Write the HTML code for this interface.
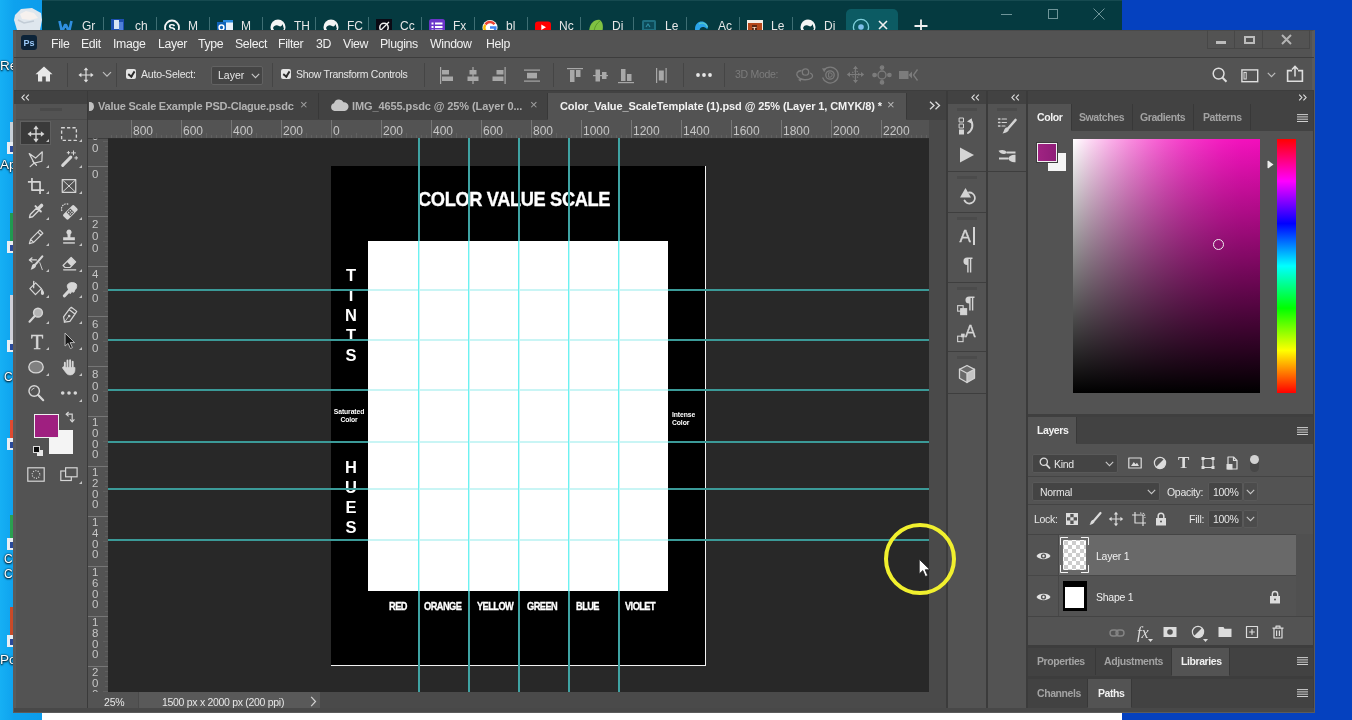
<!DOCTYPE html>
<html>
<head>
<meta charset="utf-8">
<title>Photoshop</title>
<style>
*{box-sizing:border-box;margin:0;padding:0}
html,body{width:1352px;height:720px;overflow:hidden;background:#0541bf;font-family:"Liberation Sans",sans-serif;}
.abs{position:absolute}
#desk-l{left:0;top:0;width:42px;height:720px;background:linear-gradient(90deg,#16b0f4 0,#0ea2ee 14px,#0c9cec 42px)}
#desk-r{left:1122px;top:0;width:230px;height:720px;background:#0541bf}
#browser{left:42px;top:0;width:1080px;height:720px;background:#fff}
#btop{left:0;top:0;width:1080px;height:30px;background:#053a40;overflow:hidden}
.bl{top:19px;font-size:13px;line-height:15px;color:#d5e6e8}
#ps{left:13px;top:30px;width:1302px;height:683px;background:#535353;border:solid #5b5b5b;border-width:1px 3px 4px 3px;border-top-color:#4a4a4a}
/* everything inside ps-abs uses page coordinates via #pg wrapper */
#pg{left:0;top:0;width:1352px;height:720px;will-change:transform}
#browser,#desk-l{will-change:transform}
.t{position:absolute;white-space:nowrap;color:#e6e6e6;font-size:12px;line-height:14px}
.menu{font-size:12.3px;color:#f0f0f0;top:37px;line-height:15px;letter-spacing:-0.35px}
.vsep{position:absolute;width:1px;background:#454545;top:63px;height:24px}
.cb{width:10px;height:10px;background:#e4e4e4;border-radius:2px}
.cb:after{content:"";position:absolute;left:2.2px;top:1.2px;width:4.5px;height:5.5px;border:solid #2a2a2a;border-width:0 2px 2px 0;transform:rotate(40deg) skewX(8deg);transform-origin:50% 50%;height:5px;width:3px;left:3px;top:0.8px}
.tab{top:99px;font-size:11px;font-weight:bold;letter-spacing:-0.1px}
#hr i,#vr i{position:absolute;width:1px;background:#767676;display:block}
#hr b,#vr b{position:absolute;font-weight:normal;font-size:12px;line-height:12px;color:#c6c6c6}
#hr b{top:4.5px}
#vr b{font-size:11.5px}
.doc{color:#fff;font-weight:bold}
.vl{left:341px;width:20px;text-align:center;font-size:16.5px;line-height:18px}
.tiny{font-size:6.8px;line-height:8.3px;text-align:center;letter-spacing:-0.1px}
.hl{-webkit-text-stroke:0.3px #fff;top:601px;font-size:10px;line-height:11px;letter-spacing:-0.6px;transform-origin:0 50%;transform:scaleX(.925)}
.gh{left:108px;width:821px;height:2px;background:#3b9a98}
.gh.w{left:368px;width:300px;background:#c9f5f5}
.gv{top:138px;height:554px;width:2px;background:#3fa3a3}
.gv.w{top:241px;height:350px;background:linear-gradient(90deg,#6cf2f2 0,#6cf2f2 50%,#c4f8f8 50%)}
.ptab{font-size:10.5px;font-weight:bold;color:#a3a3a3;letter-spacing:-0.42px}
.ptab.on{color:#f2f2f2}
.fld{background:#444;border:1px solid #595959;border-radius:2px}
.dk{color:#fff;font-size:13.5px;line-height:15px;text-shadow:0 0 2px #000,0 1px 2px #000}
</style>
</head>
<body>
<div class="abs" id="desk-l"><svg class="abs" style="left:12px;top:6px" width="32" height="26" viewBox="0 0 32 26"><path d="M3 9 L9 3 L20 2 L29 7 L30 14 L28 24 H5 L2 14Z" fill="#dfe7ee"/><path d="M8 8 L14 5 L22 7 L26 12 L18 14 L10 13Z" fill="#f6f1ee"/><path d="M6 14 L12 17 L22 15" stroke="#c2ccd6" stroke-width="1.5" fill="none"/></svg><span class="t dk" style="left:0px;top:58px">Re</span><span class="t dk" style="left:0px;top:157px">Ap</span><span class="t dk" style="left:4px;top:370px;font-size:12px">C</span><span class="t dk" style="left:4px;top:552px;font-size:12px">C</span><span class="t dk" style="left:4px;top:567px;font-size:12px">C</span><span class="t dk" style="left:0px;top:652px">Po</span><div class="abs" style="left:9.5px;top:122px;width:5px;height:20px;background:#c8d0d8"></div><div class="abs" style="left:7px;top:142px;width:7px;height:12px;background:#e8eef4"></div><div class="abs" style="left:9.5px;top:146px;width:5px;height:6px;background:#2a4a9a"></div><div class="abs" style="left:9.5px;top:213px;width:5px;height:28px;background:#1f9a50"></div><div class="abs" style="left:7px;top:241px;width:7px;height:12px;background:#e8eef4"></div><div class="abs" style="left:9.5px;top:245px;width:5px;height:6px;background:#2a4a9a"></div><div class="abs" style="left:9.5px;top:295px;width:5px;height:45px;background:#d0d0d8"></div><div class="abs" style="left:7px;top:340px;width:7px;height:12px;background:#e8eef4"></div><div class="abs" style="left:9.5px;top:344px;width:5px;height:6px;background:#2a4a9a"></div><div class="abs" style="left:9.5px;top:420px;width:5px;height:18px;background:#e04a30"></div><div class="abs" style="left:7px;top:438px;width:7px;height:12px;background:#e8eef4"></div><div class="abs" style="left:9.5px;top:442px;width:5px;height:6px;background:#2a4a9a"></div><div class="abs" style="left:9.5px;top:515px;width:5px;height:23px;background:#2aa050"></div><div class="abs" style="left:7px;top:538px;width:7px;height:12px;background:#e8eef4"></div><div class="abs" style="left:9.5px;top:542px;width:5px;height:6px;background:#2a4a9a"></div><div class="abs" style="left:9.5px;top:607px;width:5px;height:28px;background:#c84a28"></div><div class="abs" style="left:7px;top:635px;width:7px;height:12px;background:#e8eef4"></div><div class="abs" style="left:9.5px;top:639px;width:5px;height:6px;background:#2a4a9a"></div></div>
<div class="abs" id="desk-r"></div>
<div class="abs" id="browser"><div class="abs" id="btop"><div class="abs" style="left:0;top:0;width:1080px;height:1px;background:#164a50"></div><div class="abs" style="left:804px;top:9px;width:52px;height:24px;background:#0c5b63;border-radius:5px 5px 0 0"></div><span class="t bl" style="left:40px">Gr</span><div class="abs" style="left:61px;top:17px;width:1px;height:14px;background:#3f6f74"></div><span class="t bl" style="left:93px">ch</span><div class="abs" style="left:114px;top:17px;width:1px;height:14px;background:#3f6f74"></div><span class="t bl" style="left:146px">M</span><div class="abs" style="left:167px;top:17px;width:1px;height:14px;background:#3f6f74"></div><span class="t bl" style="left:199px">M</span><div class="abs" style="left:220px;top:17px;width:1px;height:14px;background:#3f6f74"></div><span class="t bl" style="left:252px">TH</span><div class="abs" style="left:273px;top:17px;width:1px;height:14px;background:#3f6f74"></div><span class="t bl" style="left:305px">FC</span><div class="abs" style="left:326px;top:17px;width:1px;height:14px;background:#3f6f74"></div><span class="t bl" style="left:358px">Cc</span><div class="abs" style="left:379px;top:17px;width:1px;height:14px;background:#3f6f74"></div><span class="t bl" style="left:411px">Fx</span><div class="abs" style="left:432px;top:17px;width:1px;height:14px;background:#3f6f74"></div><span class="t bl" style="left:464px">bl</span><div class="abs" style="left:485px;top:17px;width:1px;height:14px;background:#3f6f74"></div><span class="t bl" style="left:517px">Nc</span><div class="abs" style="left:538px;top:17px;width:1px;height:14px;background:#3f6f74"></div><span class="t bl" style="left:570px">Di</span><div class="abs" style="left:591px;top:17px;width:1px;height:14px;background:#3f6f74"></div><span class="t bl" style="left:623px">Le</span><div class="abs" style="left:644px;top:17px;width:1px;height:14px;background:#3f6f74"></div><span class="t bl" style="left:676px">Ac</span><div class="abs" style="left:697px;top:17px;width:1px;height:14px;background:#3f6f74"></div><span class="t bl" style="left:729px">Le</span><div class="abs" style="left:750px;top:17px;width:1px;height:14px;background:#3f6f74"></div><span class="t bl" style="left:782px">Di</span><svg class="abs" style="left:16px;top:19px" width="16" height="16" viewBox="0 0 16 16"><path d="M1.5 2 L4 13 L7 6 L8 6 L11 13 L13.5 2" stroke="#2f8fe0" stroke-width="2.6" fill="none" stroke-linejoin="round"/></svg><svg class="abs" style="left:69px;top:19px" width="16" height="16" viewBox="0 0 16 16"><rect x="0" y="0" width="13" height="14" fill="#1d4fb0"/><rect x="3" y="1" width="5" height="9" fill="#d8e4f4"/><rect x="8" y="3" width="4" height="8" fill="#4f7fd8"/></svg><svg class="abs" style="left:122px;top:19px" width="16" height="16" viewBox="0 0 16 16"><circle cx="8" cy="8.5" r="7" fill="#053a40" stroke="#f4f4f4" stroke-width="1.8"/><text x="8" y="13" font-family="Liberation Sans" font-weight="bold" font-size="11" fill="#fff" text-anchor="middle">S</text></svg><svg class="abs" style="left:175px;top:19px" width="16" height="16" viewBox="0 0 16 16"><rect x="6" y="1" width="10" height="13" fill="#2a8be0"/><rect x="9" y="3.5" width="7" height="8" fill="#eaf2fb"/><rect x="0" y="3" width="9" height="11" fill="#0f63b8"/><circle cx="4.5" cy="8.5" r="2.4" fill="none" stroke="#fff" stroke-width="1.5"/></svg><svg class="abs" style="left:228px;top:19px" width="16" height="16" viewBox="0 0 16 16"><circle cx="8" cy="8" r="7.5" fill="#f4f4f4"/><path d="M3 9 C4 6 7 5.5 9 7 C10.5 8 12 7 12.5 5 L14 10 L10 14 L5 13Z" fill="#053a40"/></svg><svg class="abs" style="left:281px;top:19px" width="16" height="16" viewBox="0 0 16 16"><circle cx="8" cy="8" r="7.5" fill="#f4f4f4"/><path d="M3 9 C4 6 7 5.5 9 7 C10.5 8 12 7 12.5 5 L14 10 L10 14 L5 13Z" fill="#053a40"/></svg><svg class="abs" style="left:334px;top:19px" width="16" height="16" viewBox="0 0 16 16"><rect x="-2" y="-1" width="18" height="18" fill="#0a0a14"/><circle cx="8" cy="8.5" r="4.2" fill="none" stroke="#f0f0f0" stroke-width="1.5"/><path d="M3 13L13 3" stroke="#f0f0f0" stroke-width="1.3"/></svg><svg class="abs" style="left:387px;top:19px" width="16" height="16" viewBox="0 0 16 16"><rect x="0" y="0" width="16" height="16" rx="2.5" fill="#6b35c9"/><path d="M2.5 4.5H4.5M6 4.5H13.5M2.5 8H4.5M6 8H13.5M2.5 11.5H4.5M6 11.5H13.5" stroke="#fff" stroke-width="1.8"/></svg><svg class="abs" style="left:440px;top:19px" width="16" height="16" viewBox="0 0 16 16"><circle cx="8" cy="8.5" r="7.5" fill="#fff"/><path d="M12.5 5.2 A5.4 5.4 0 0 0 3.5 5.5" stroke="#ea4335" stroke-width="2.4" fill="none"/><path d="M3.3 5.8 A5.4 5.4 0 0 0 3.6 12" stroke="#fbbc05" stroke-width="2.4" fill="none"/><path d="M3.6 12 A5.4 5.4 0 0 0 12 12.5" stroke="#34a853" stroke-width="2.4" fill="none"/><path d="M8 8.5 H13.4 A5.4 5.4 0 0 1 12 12.5" stroke="#4285f4" stroke-width="2.4" fill="none"/></svg><svg class="abs" style="left:493px;top:19px" width="16" height="16" viewBox="0 0 16 16"><rect x="0" y="2.5" width="16" height="11.5" rx="3" fill="#f00"/><path d="M6.3 5.5 L11 8.2 L6.3 11Z" fill="#fff"/></svg><svg class="abs" style="left:546px;top:19px" width="16" height="16" viewBox="0 0 16 16"><path d="M1 14 C1 5 6 0 12 1 C16 4 15 10 14 14 Z" fill="#7fc242"/><path d="M6 14 C6 8 9 4 12 2" stroke="#5a9a2a" stroke-width="1" fill="none"/></svg><svg class="abs" style="left:599px;top:19px" width="16" height="16" viewBox="0 0 16 16"><rect x="1" y="1" width="14" height="12" rx="1.5" fill="#1f6f80"/><rect x="3" y="3" width="10" height="7" fill="#0c4a58"/><path d="M5 8 L7 5 L9 8" stroke="#2f8da0" stroke-width="1.2" fill="none"/></svg><svg class="abs" style="left:652px;top:19px" width="16" height="16" viewBox="0 0 16 16"><path d="M1 10 C1 4 6 1.5 10 3 C14 4.5 15 9 13 10 C10 7 6 7.5 5.5 11 C5 13.5 8 15 11 14 C7 17 1 15 1 10Z" fill="#2aa3e8"/><path d="M5 5 C8 3 12 4 13.5 8" stroke="#5fd0c0" stroke-width="1.2" fill="none"/></svg><svg class="abs" style="left:705px;top:19px" width="16" height="16" viewBox="0 0 16 16"><rect x="0" y="1" width="16" height="15" fill="#f2ece6"/><rect x="1" y="4" width="14" height="12" fill="#b5461a"/><rect x="5" y="6" width="5" height="8" fill="#5a2410"/><text x="7.5" y="13" font-family="Liberation Sans" font-weight="bold" font-size="7" fill="#f4d8c0" text-anchor="middle">T</text></svg><svg class="abs" style="left:758px;top:19px" width="16" height="16" viewBox="0 0 16 16"><circle cx="8" cy="8" r="7.5" fill="#f4f4f4"/><path d="M3 9 C4 6 7 5.5 9 7 C10.5 8 12 7 12.5 5 L14 10 L10 14 L5 13Z" fill="#053a40"/></svg><svg class="abs" style="left:810px;top:18px" width="18" height="18" viewBox="0 0 18 18"><circle cx="9" cy="9" r="7.6" fill="none" stroke="#7fd0dc" stroke-width="1.3"/><circle cx="9" cy="9" r="2.8" fill="#7fc0ea"/></svg><svg class="abs" style="left:836px;top:20px" width="10" height="10" viewBox="0 0 10 10"><path d="M1 1L9 9M9 1L1 9" stroke="#f0f0f0" stroke-width="1.6"/></svg><svg class="abs" style="left:872px;top:19px" width="14" height="14" viewBox="0 0 14 14"><path d="M7 0.5V13.5M0.5 7H13.5" stroke="#f0f0f0" stroke-width="1.8"/></svg><div class="abs" style="left:959px;top:14px;width:11px;height:1px;background:#6f9599"></div><div class="abs" style="left:1006px;top:9px;width:10px;height:10px;border:1px solid #6f9599"></div><svg class="abs" style="left:1051px;top:8px" width="12" height="12" viewBox="0 0 12 12"><path d="M0.5 0.5L11.5 11.5M11.5 0.5L0.5 11.5" stroke="#6f9599" stroke-width="1"/></svg></div></div>
<div class="abs" id="ps"></div>
<div class="abs" id="pg">
<!-- MENUBAR -->
<div class="abs" style="left:14px;top:57px;width:1300px;height:1px;background:#3d3d3d"></div>
<div class="abs" id="pslogo" style="left:21px;top:35px;width:16px;height:15px;background:#0c2338;border-radius:3px"></div>
<span class="t" style="left:23.5px;top:36.5px;font-size:9px;font-weight:bold;color:#9ccaf8;line-height:12px">Ps</span>
<span class="t menu" style="left:51px">File</span>
<span class="t menu" style="left:81px">Edit</span>
<span class="t menu" style="left:113px">Image</span>
<span class="t menu" style="left:158px">Layer</span>
<span class="t menu" style="left:198px">Type</span>
<span class="t menu" style="left:235px">Select</span>
<span class="t menu" style="left:278px">Filter</span>
<span class="t menu" style="left:316px">3D</span>
<span class="t menu" style="left:343px">View</span>
<span class="t menu" style="left:380px">Plugins</span>
<span class="t menu" style="left:430px">Window</span>
<span class="t menu" style="left:486px">Help</span>
<!-- OPTIONSBAR -->
<div class="abs" style="left:14px;top:90px;width:1300px;height:1px;background:#3d3d3d"></div>
<svg class="abs" style="left:34px;top:65px" width="20" height="18" viewBox="0 0 20 18"><path d="M10 1.5 L1.5 9.2 H4 V16.5 H8.2 V11.5 H11.8 V16.5 H16 V9.2 H18.5 Z" fill="#e8e8e8"/></svg>
<div class="vsep" style="left:67px"></div>
<svg class="abs" style="left:77.5px;top:66.5px" width="16" height="16" viewBox="0 0 19 19"><g stroke="#e0e0e0" stroke-width="1.4" fill="none"><path d="M9.5 2.5V16.5M2.5 9.5H16.5"/></g><path d="M9.5 0.5 L12.3 4 H6.7Z M9.5 18.5 L12.3 15 H6.7Z M0.5 9.5 L4 6.7 V12.3Z M18.5 9.5 L15 6.7 V12.3Z" fill="#e0e0e0"/></svg>
<svg class="abs" style="left:102px;top:71px" width="10" height="7" viewBox="0 0 10 7"><path d="M1 1.2 L5 5.2 L9 1.2" stroke="#bdbdbd" stroke-width="1.2" fill="none"/></svg>
<div class="vsep" style="left:116px"></div>
<div class="abs cb" style="left:126px;top:69px"></div>
<span class="t" style="left:141px;top:67px;font-size:10.5px;letter-spacing:-0.2px">Auto-Select:</span>
<div class="abs" style="left:211px;top:66px;width:52px;height:19px;background:#454545;border:1px solid #626262;border-radius:2px"></div>
<span class="t" style="left:218px;top:68px;font-size:10.5px">Layer</span>
<svg class="abs" style="left:251px;top:73px" width="9" height="6" viewBox="0 0 9 6"><path d="M0.8 0.8 L4.5 4.6 L8.2 0.8" stroke="#c8c8c8" stroke-width="1.1" fill="none"/></svg>
<div class="vsep" style="left:272px"></div>
<div class="abs cb" style="left:281px;top:69px"></div>
<span class="t" style="left:296px;top:67px;font-size:10.5px;letter-spacing:-0.3px">Show Transform Controls</span>
<div class="vsep" style="left:424px"></div>
<!-- align icons -->
<svg class="abs" style="left:438px;top:66px" width="110" height="19" viewBox="0 0 110 19" fill="#a8a8a8">
<rect x="2" y="1" width="1.2" height="17"/><rect x="4" y="4" width="7" height="4.5"/><rect x="4" y="10.5" width="11" height="4.5"/>
<rect x="34.4" y="1" width="1.2" height="17"/><rect x="31.5" y="4" width="7" height="4.5"/><rect x="29.5" y="10.5" width="11" height="4.5"/>
<rect x="66.5" y="1" width="1.2" height="17"/><rect x="58.5" y="4" width="7" height="4.5"/><rect x="54.5" y="10.5" width="11" height="4.5"/>
<rect x="86" y="3.5" width="16" height="1.2"/><rect x="86" y="14.5" width="16" height="1.2"/><rect x="89" y="6.8" width="10" height="5.6"/>
</svg>
<div class="vsep" style="left:553px"></div>
<svg class="abs" style="left:564px;top:66px" width="110" height="19" viewBox="0 0 110 19" fill="#a8a8a8">
<rect x="3" y="2" width="16" height="1.2"/><rect x="6" y="4" width="4.5" height="12"/><rect x="12" y="4" width="4.5" height="7"/>
<rect x="29" y="9" width="15" height="1.2"/><rect x="31.5" y="3.5" width="4.5" height="12"/><rect x="38" y="6" width="4.5" height="7"/>
<rect x="54" y="16" width="16" height="1.2"/><rect x="57" y="3" width="4.5" height="12"/><rect x="63" y="8" width="4.5" height="7"/>
<rect x="92" y="2" width="1.2" height="15"/><rect x="101.5" y="2" width="1.2" height="15"/><rect x="94.8" y="4.5" width="5" height="10"/>
</svg>
<div class="vsep" style="left:683px"></div>
<svg class="abs" style="left:695px;top:72px" width="18" height="6" viewBox="0 0 18 6" fill="#e6e6e6"><circle cx="3" cy="3" r="1.9"/><circle cx="9" cy="3" r="1.9"/><circle cx="15" cy="3" r="1.9"/></svg>
<div class="vsep" style="left:724px"></div>
<span class="t" style="left:735px;top:67px;font-size:11px;color:#7c7c7c;letter-spacing:-0.3px;font-size:10.5px">3D Mode:</span>
<svg class="abs" style="left:794px;top:65px" width="20" height="20" viewBox="0 0 20 20" fill="none" stroke="#7c7c7c" stroke-width="1.3"><circle cx="11.5" cy="7" r="3.2"/><path d="M7.5 5.5 C3 6 1.5 9 4 12 C7 15.5 14 15.5 17.5 13 C19.5 11.5 18.5 9 16 8"/><path d="M4 14.8 L7.8 13.2 L6.6 16.8Z" fill="#7c7c7c" stroke="none"/></svg>
<svg class="abs" style="left:820px;top:65px" width="20" height="20" viewBox="0 0 20 20" fill="none" stroke="#7c7c7c" stroke-width="1.3"><path d="M4 5 A8 8 0 1 1 2.6 12.5"/><path d="M2 3.2 L6.2 3.6 L4.2 7.2Z" fill="#7c7c7c" stroke="none"/><circle cx="10" cy="10" r="4.2"/><path d="M8.6 7.8 V12.2 H10 A2.2 2.2 0 0 0 10 7.8Z" stroke-width="1"/></svg>
<svg class="abs" style="left:846px;top:65px" width="19" height="19" viewBox="0 0 19 19" fill="none" stroke="#7c7c7c" stroke-width="1.2"><path d="M9.5 3V16M3 9.5H16"/><path d="M9.5 0.8 L12 4 H7Z M9.5 18.2 L12 15 H7Z M0.8 9.5 L4 7 V12Z M18.2 9.5 L15 7 V12Z" fill="#7c7c7c" stroke="none"/><circle cx="9.5" cy="9.5" r="3.4" stroke-dasharray="1.2 1.2"/></svg>
<svg class="abs" style="left:872px;top:65px" width="20" height="20" viewBox="0 0 20 20" fill="none" stroke="#7c7c7c" stroke-width="1.3"><circle cx="10" cy="10" r="4"/><circle cx="10" cy="2.6" r="1.7" fill="#7c7c7c"/><circle cx="10" cy="17.4" r="1.7" fill="#7c7c7c"/><circle cx="2.6" cy="10" r="1.7" fill="#7c7c7c"/><circle cx="17.4" cy="10" r="1.7" fill="#7c7c7c"/></svg>
<svg class="abs" style="left:898px;top:67px" width="21" height="16" viewBox="0 0 21 16" fill="none" stroke="#7c7c7c" stroke-width="1.3"><rect x="1" y="4" width="9.5" height="8" fill="#7c7c7c" stroke="none"/><path d="M10.5 8 L14 4.6 V11.4Z" fill="#7c7c7c" stroke="none"/><path d="M19.5 2.5 L15.5 8 L19.5 13.5"/></svg>
<div class="abs" style="left:1207px;top:30px;width:103px;height:19px;border:1px solid #474747;border-top:none"></div>
<div class="abs" style="left:1234px;top:30px;width:1px;height:18px;background:#474747"></div>
<div class="abs" style="left:1262px;top:30px;width:1px;height:18px;background:#474747"></div>
<div class="abs" style="left:1216px;top:41px;width:10px;height:3px;background:#bcbcbc"></div>
<div class="abs" style="left:1244px;top:36px;width:11px;height:8px;border:2px solid #bcbcbc"></div>
<svg class="abs" style="left:1281px;top:34px" width="11" height="11" viewBox="0 0 11 11"><path d="M1 1L10 10M10 1L1 10" stroke="#b4b4b4" stroke-width="2"/></svg>
<svg class="abs" style="left:1211px;top:66px" width="17" height="17" viewBox="0 0 17 17" fill="none" stroke="#dedede"><circle cx="7.6" cy="7.6" r="5.4" stroke-width="1.5"/><path d="M11.6 11.8 L15.5 15.8" stroke-width="2"/></svg>
<svg class="abs" style="left:1241px;top:69px" width="18" height="14" viewBox="0 0 18 14" fill="none" stroke="#dedede" stroke-width="1.4"><rect x="0.9" y="0.9" width="15.8" height="11.8"/><rect x="3" y="3.4" width="2.2" height="6.6" stroke-width="1"/></svg>
<svg class="abs" style="left:1267px;top:72px" width="9" height="6" viewBox="0 0 9 6"><path d="M0.8 0.8 L4.5 4.6 L8.2 0.8" stroke="#bdbdbd" stroke-width="1.2" fill="none"/></svg>
<svg class="abs" style="left:1286px;top:65px" width="18" height="18" viewBox="0 0 18 18" fill="none" stroke="#dedede" stroke-width="1.6"><path d="M6 5.6 H1.6 V16.2 H16.4 V5.6 H12"/><path d="M9 11.5 V2 M6 4.6 L9 1.4 L12 4.6" stroke-width="1.5"/></svg>
<!-- TABS -->
<div class="abs" style="left:14px;top:91px;width:1300px;height:13px;background:#424242"></div>
<div class="abs" style="left:88px;top:91px;width:858px;height:29px;background:#424242"></div>
<div class="abs" style="left:548px;top:93px;width:358px;height:27px;background:#535353"></div>
<div class="abs" style="left:318px;top:93px;width:1px;height:26px;background:#383838"></div>
<div class="abs" style="left:547px;top:93px;width:1px;height:26px;background:#383838"></div>
<div class="abs" style="left:906px;top:93px;width:1px;height:26px;background:#383838"></div>
<div class="abs" style="left:87px;top:91px;width:1px;height:620px;background:#3a3a3a"></div>
<svg class="abs" style="left:89px;top:102px" width="5" height="9" viewBox="0 0 5 9"><path d="M0 0 H1 A4 4.5 0 0 1 1 9 H0Z" fill="#c0c0c0"/></svg>
<span class="t tab" style="left:98px;color:#b2b2b2;letter-spacing:-0.23px">Value Scale Example PSD-Clague.psdc</span>
<span class="t" style="left:300px;top:98px;font-size:13px;color:#a0a0a0">×</span>
<svg class="abs" style="left:330px;top:99px" width="19" height="12" viewBox="0 0 19 12"><path d="M4.5 12 A4 4 0 0 1 4 4.2 A5.2 5.2 0 0 1 13.6 3.2 A4.4 4.4 0 0 1 14.6 12 Z" fill="#c6c6c6"/></svg>
<span class="t tab" style="left:352px;color:#b2b2b2">IMG_4655.psdc @ 25% (Layer 0...</span>
<span class="t" style="left:530px;top:98px;font-size:13px;color:#a0a0a0">×</span>
<span class="t tab" style="left:560px;color:#f2f2f2">Color_Value_ScaleTemplate (1).psd @ 25% (Layer 1, CMYK/8) *</span>
<span class="t" style="left:887px;top:98px;font-size:13px;color:#b8b8b8">×</span>
<svg class="abs" style="left:929px;top:101px" width="12" height="9" viewBox="0 0 12 9"><path d="M1 0.8 L5 4.5 L1 8.2 M6.5 0.8 L10.5 4.5 L6.5 8.2" stroke="#dcdcdc" stroke-width="1.3" fill="none"/></svg>
<!-- TOOLS -->
<div class="abs" style="left:16px;top:104px;width:71px;height:15px;background:#535353"></div>
<div class="abs" style="left:16px;top:119px;width:71px;height:1px;background:#4a4a4a"></div>
<div class="abs" style="left:40px;top:108px;width:22px;height:3px;background:#4a4a4a"></div>
<svg class="abs" style="left:21px;top:94px" width="9" height="7" viewBox="0 0 9 7"><path d="M3.6 0.6 L0.9 3.5 L3.6 6.4 M7.8 0.6 L5.1 3.5 L7.8 6.4" stroke="#e2e2e2" stroke-width="1.1" fill="none"/></svg>
<div class="abs" style="left:20px;top:121px;width:31px;height:24px;background:#3a3a3a;border:1px solid #5f5f5f"></div>
<svg class="abs" style="left:26.5px;top:124.5px" width="18" height="18" viewBox="0 0 20 20" fill="none" stroke="#d6d6d6" stroke-width="1.35" stroke-linecap="round" stroke-linejoin="round"><path d="M10 3V17M3 10H17" stroke-width="1.5"/><path d="M10 0.6 L13 4.6 H7Z M10 19.4 L13 15.4 H7Z M0.6 10 L4.6 7 V13Z M19.4 10 L15.4 7 V13Z" fill="#d6d6d6" stroke="none"/></svg>
<svg class="abs" style="left:60px;top:124.5px" width="18" height="18" viewBox="0 0 20 20" fill="none" stroke="#d6d6d6" stroke-width="1.35" stroke-linecap="round" stroke-linejoin="round"><rect x="1.8" y="3" width="16.4" height="14" stroke-dasharray="3.6 2.4" stroke-linecap="butt" stroke-width="1.5"/></svg>
<svg class="abs" style="left:26.5px;top:150px" width="18" height="18" viewBox="0 0 20 20" fill="none" stroke="#d6d6d6" stroke-width="1.35" stroke-linecap="round" stroke-linejoin="round"><path d="M2.5 4 L9.5 9 L17 2 L16.5 12.5 L8 14.5 Z"/><path d="M8 14.5 L3.5 18.5 M8 14.5 L10.5 17 M6.5 12.5 L8 14.5" /></svg>
<svg class="abs" style="left:60px;top:150px" width="18" height="18" viewBox="0 0 20 20" fill="none" stroke="#d6d6d6" stroke-width="1.35" stroke-linecap="round" stroke-linejoin="round"><path d="M3 17 L12 8" stroke-width="3.4" stroke-linecap="round"/><path d="M15 1V5.4M12.8 3.2H17.2M18 7.2V10.4M16.4 8.8H19.6M9.4 1.6V4.4M8 3H10.8" stroke-width="1.1"/></svg>
<svg class="abs" style="left:26.5px;top:176.5px" width="18" height="18" viewBox="0 0 20 20" fill="none" stroke="#d6d6d6" stroke-width="1.35" stroke-linecap="round" stroke-linejoin="round"><path d="M5.5 1V14.5H19M1 5.5H14.5V19" stroke-width="1.9" stroke-linecap="butt"/></svg>
<svg class="abs" style="left:60px;top:176.5px" width="18" height="18" viewBox="0 0 20 20" fill="none" stroke="#d6d6d6" stroke-width="1.35" stroke-linecap="round" stroke-linejoin="round"><rect x="2.5" y="3" width="15" height="14"/><path d="M2.5 3L17.5 17M17.5 3L2.5 17" stroke-width="1.1"/></svg>
<svg class="abs" style="left:26.5px;top:202px" width="18" height="18" viewBox="0 0 20 20" fill="none" stroke="#d6d6d6" stroke-width="1.35" stroke-linecap="round" stroke-linejoin="round"><path d="M2.8 17.2 L3.6 13.8 L10.5 6.9 L13.1 9.5 L6.2 16.4 Z" stroke-width="1.5"/><path d="M9.4 4.6 L15.4 10.6" stroke-width="2.2"/><path d="M12.6 7.4 L16.2 3.8" stroke-width="3.8"/></svg>
<svg class="abs" style="left:60px;top:202px" width="18" height="18" viewBox="0 0 20 20" fill="none" stroke="#d6d6d6" stroke-width="1.35" stroke-linecap="round" stroke-linejoin="round"><g transform="rotate(-45 11.5 11.5)"><rect x="3" y="7.5" width="17" height="8" rx="2" fill="#d6d6d6" stroke="none"/><rect x="8.5" y="8.5" width="6" height="6" fill="#535353" stroke="none"/><circle cx="10.2" cy="10.2" r="0.85" fill="#d6d6d6" stroke="none"/><circle cx="12.8" cy="10.2" r="0.85" fill="#d6d6d6" stroke="none"/><circle cx="10.2" cy="12.8" r="0.85" fill="#d6d6d6" stroke="none"/><circle cx="12.8" cy="12.8" r="0.85" fill="#d6d6d6" stroke="none"/></g><path d="M2 9.5 A5.5 5.5 0 0 1 9 2.4" stroke-dasharray="0.8 2" stroke-width="1.3"/></svg>
<svg class="abs" style="left:26.5px;top:228px" width="18" height="18" viewBox="0 0 20 20" fill="none" stroke="#d6d6d6" stroke-width="1.35" stroke-linecap="round" stroke-linejoin="round"><path d="M2.6 17.4 L4 12.6 L14.2 2.4 L17.6 5.8 L7.4 16 Z M4 12.6 L7.4 16 M12 4.6 L15.4 8" stroke-width="1.3"/></svg>
<svg class="abs" style="left:60px;top:228px" width="18" height="18" viewBox="0 0 20 20" fill="none" stroke="#d6d6d6" stroke-width="1.35" stroke-linecap="round" stroke-linejoin="round"><path d="M10 1.8 A2.9 2.9 0 0 1 11.8 7 L11.5 10.2 H16.5 V13.6 H3.5 V10.2 H8.5 L8.2 7 A2.9 2.9 0 0 1 10 1.8Z" fill="#d6d6d6" stroke="none"/><path d="M3.5 16.6H16.5" stroke-width="1.6" stroke-linecap="butt"/></svg>
<svg class="abs" style="left:26.5px;top:254px" width="18" height="18" viewBox="0 0 20 20" fill="none" stroke="#d6d6d6" stroke-width="1.35" stroke-linecap="round" stroke-linejoin="round"><path d="M17 2.6 L10 11" stroke-width="2.4"/><path d="M9.6 11.2 C11 12.8 10 16 4 17.6 C5.4 15.4 5 12.6 6.6 11.4 C7.5 10.7 8.8 10.6 9.6 11.2Z" fill="#d6d6d6" stroke="none"/><path d="M2.6 6.6 H10.5 M2.6 6.6 L5.6 4.2 M2.6 6.6 L5.6 9" stroke-width="1.3"/><path d="M14.2 9.6 L17 17.4" stroke-width="1"/></svg>
<svg class="abs" style="left:60px;top:254px" width="18" height="18" viewBox="0 0 20 20" fill="none" stroke="#d6d6d6" stroke-width="1.35" stroke-linecap="round" stroke-linejoin="round"><path d="M3.4 12.8 L12.4 3.8 L17.4 8.8 L11.2 15 H5.6Z" stroke-width="1.3"/><path d="M7.6 8.6 L12.4 3.8 L17.4 8.8 L12.6 13.6Z" fill="#d6d6d6" stroke="none"/><path d="M4 17.6H17.5" stroke-width="1.3"/></svg>
<svg class="abs" style="left:26.5px;top:280px" width="18" height="18" viewBox="0 0 20 20" fill="none" stroke="#d6d6d6" stroke-width="1.35" stroke-linecap="round" stroke-linejoin="round"><path d="M3.2 9.6 L9.6 3.2 L16 9.6 L9.4 16.2 Z" stroke-width="1.4"/><path d="M7.4 1.4 V8.6" stroke-width="1.4"/><path d="M16.2 9 C17.8 11.4 19 13.2 19 14.8 A1.8 1.8 0 0 1 15.4 14.8 C15.4 13 15.8 11.2 16.2 9Z" fill="#d6d6d6" stroke="none"/></svg>
<svg class="abs" style="left:60px;top:280px" width="18" height="18" viewBox="0 0 20 20" fill="none" stroke="#d6d6d6" stroke-width="1.35" stroke-linecap="round" stroke-linejoin="round"><path d="M12 10 L5 17.5" stroke-width="3.6"/><path d="M8.5 8.5 C7 6 9 3.5 12 3 C15 2.5 18 3.5 18.5 5.5 C18.8 8 18 10 16.5 11 L15.5 13.5 L13 13 L11.5 15 Z" fill="#d6d6d6" stroke="#d6d6d6" stroke-width="1"/></svg>
<svg class="abs" style="left:26.5px;top:306px" width="18" height="18" viewBox="0 0 20 20" fill="none" stroke="#d6d6d6" stroke-width="1.35" stroke-linecap="round" stroke-linejoin="round"><circle cx="12.2" cy="7.4" r="4.9" fill="#b4b4b4" stroke-width="1.6"/><path d="M8.6 11.2 L2.8 17.4" stroke-width="2.4"/></svg>
<svg class="abs" style="left:60px;top:306px" width="18" height="18" viewBox="0 0 20 20" fill="none" stroke="#d6d6d6" stroke-width="1.35" stroke-linecap="round" stroke-linejoin="round"><path d="M5 18 L4 12 L10 4 L16.6 9 L11 17 Z" stroke-width="1.4"/><path d="M5 18 L9.6 11.6" stroke-width="1"/><circle cx="10.2" cy="11" r="1.4" fill="#d6d6d6" stroke="none"/><path d="M10.4 3.2 L12.6 1.4 L18.6 6 L17 8.4" stroke-width="1.3"/></svg>
<span class="t" style="left:31.0px;top:329.5px;font-family:'Liberation Serif',serif;font-size:20px;line-height:24px;color:#d6d6d6;-webkit-text-stroke:0.5px #d6d6d6">T</span>
<svg class="abs" style="left:60px;top:332px" width="18" height="18" viewBox="0 0 20 20" fill="none" stroke="#d6d6d6" stroke-width="1.35" stroke-linecap="round" stroke-linejoin="round"><path d="M5.6 1.6 V15.6 L9 12.6 L11.6 18.4 L13.8 17.4 L11.3 11.8 H15.8 Z" fill="#1a1a1a" stroke="#c4c4c4" stroke-width="1"/></svg>
<svg class="abs" style="left:26.5px;top:358px" width="18" height="18" viewBox="0 0 20 20" fill="none" stroke="#d6d6d6" stroke-width="1.35" stroke-linecap="round" stroke-linejoin="round"><ellipse cx="10" cy="10" rx="8" ry="6.6" fill="#808080" stroke-width="1.5"/></svg>
<svg class="abs" style="left:60px;top:358px" width="18" height="18" viewBox="0 0 20 20" fill="none" stroke="#d6d6d6" stroke-width="1.35" stroke-linecap="round" stroke-linejoin="round"><path d="M5.4 11.5 V5.2 M8.3 10.5 V2.8 M11.2 10.5 V2.4 M14.1 11 V4.2" stroke-width="2.1"/><path d="M4.4 10.5 H15.2 V13 C15.2 16 13.5 18.8 10.5 18.8 H9.5 C7.5 18.8 6.2 17.8 5 16 L1.6 11.4 C0.9 10.2 2.4 9.2 3.4 10.2 L5.2 12.2 Z" fill="#d6d6d6" stroke="#d6d6d6" stroke-width="0.8" transform="translate(1.4 0)"/></svg>
<svg class="abs" style="left:26.5px;top:384px" width="18" height="18" viewBox="0 0 20 20" fill="none" stroke="#d6d6d6" stroke-width="1.35" stroke-linecap="round" stroke-linejoin="round"><circle cx="8" cy="7.8" r="5.8" stroke-width="1.6"/><path d="M12.4 12.2 L18 18" stroke-width="2.4"/><path d="M5.2 6.8 A3.2 3.2 0 0 1 7.8 4.6" stroke-width="1"/></svg>
<svg class="abs" style="left:60px;top:384px" width="18" height="18" viewBox="0 0 20 20" fill="none" stroke="#d6d6d6" stroke-width="1.35" stroke-linecap="round" stroke-linejoin="round"><circle cx="3" cy="10" r="2" fill="#d6d6d6" stroke="none"/><circle cx="10" cy="10" r="2" fill="#d6d6d6" stroke="none"/><circle cx="17" cy="10" r="2" fill="#d6d6d6" stroke="none"/></svg>
<svg class="abs" style="left:46px;top:139px" width="3" height="3" viewBox="0 0 3 3"><path d="M3 0V3H0Z" fill="#c4c4c4"/></svg>
<svg class="abs" style="left:79px;top:139px" width="3" height="3" viewBox="0 0 3 3"><path d="M3 0V3H0Z" fill="#c4c4c4"/></svg>
<svg class="abs" style="left:46px;top:165px" width="3" height="3" viewBox="0 0 3 3"><path d="M3 0V3H0Z" fill="#c4c4c4"/></svg>
<svg class="abs" style="left:79px;top:165px" width="3" height="3" viewBox="0 0 3 3"><path d="M3 0V3H0Z" fill="#c4c4c4"/></svg>
<svg class="abs" style="left:46px;top:191px" width="3" height="3" viewBox="0 0 3 3"><path d="M3 0V3H0Z" fill="#c4c4c4"/></svg>
<svg class="abs" style="left:79px;top:191px" width="3" height="3" viewBox="0 0 3 3"><path d="M3 0V3H0Z" fill="#c4c4c4"/></svg>
<svg class="abs" style="left:46px;top:217px" width="3" height="3" viewBox="0 0 3 3"><path d="M3 0V3H0Z" fill="#c4c4c4"/></svg>
<svg class="abs" style="left:79px;top:217px" width="3" height="3" viewBox="0 0 3 3"><path d="M3 0V3H0Z" fill="#c4c4c4"/></svg>
<svg class="abs" style="left:46px;top:243px" width="3" height="3" viewBox="0 0 3 3"><path d="M3 0V3H0Z" fill="#c4c4c4"/></svg>
<svg class="abs" style="left:79px;top:243px" width="3" height="3" viewBox="0 0 3 3"><path d="M3 0V3H0Z" fill="#c4c4c4"/></svg>
<svg class="abs" style="left:46px;top:269px" width="3" height="3" viewBox="0 0 3 3"><path d="M3 0V3H0Z" fill="#c4c4c4"/></svg>
<svg class="abs" style="left:79px;top:269px" width="3" height="3" viewBox="0 0 3 3"><path d="M3 0V3H0Z" fill="#c4c4c4"/></svg>
<svg class="abs" style="left:46px;top:295px" width="3" height="3" viewBox="0 0 3 3"><path d="M3 0V3H0Z" fill="#c4c4c4"/></svg>
<svg class="abs" style="left:79px;top:295px" width="3" height="3" viewBox="0 0 3 3"><path d="M3 0V3H0Z" fill="#c4c4c4"/></svg>
<svg class="abs" style="left:46px;top:321px" width="3" height="3" viewBox="0 0 3 3"><path d="M3 0V3H0Z" fill="#c4c4c4"/></svg>
<svg class="abs" style="left:79px;top:321px" width="3" height="3" viewBox="0 0 3 3"><path d="M3 0V3H0Z" fill="#c4c4c4"/></svg>
<svg class="abs" style="left:46px;top:347px" width="3" height="3" viewBox="0 0 3 3"><path d="M3 0V3H0Z" fill="#c4c4c4"/></svg>
<svg class="abs" style="left:79px;top:347px" width="3" height="3" viewBox="0 0 3 3"><path d="M3 0V3H0Z" fill="#c4c4c4"/></svg>
<svg class="abs" style="left:46px;top:373px" width="3" height="3" viewBox="0 0 3 3"><path d="M3 0V3H0Z" fill="#c4c4c4"/></svg>
<svg class="abs" style="left:79px;top:373px" width="3" height="3" viewBox="0 0 3 3"><path d="M3 0V3H0Z" fill="#c4c4c4"/></svg>
<svg class="abs" style="left:79px;top:399px" width="3" height="3" viewBox="0 0 3 3"><path d="M3 0V3H0Z" fill="#c4c4c4"/></svg>
<div class="abs" style="left:49px;top:430px;width:24px;height:24px;background:#f4f4f4"></div>
<div class="abs" style="left:34px;top:414px;width:25px;height:24px;background:#9f1f80;border:1px solid #f0f0f0"></div>
<div class="abs" style="left:37px;top:450px;width:6px;height:6px;background:#e8e8e8"></div>
<div class="abs" style="left:33px;top:446px;width:7px;height:7px;background:#0a0a0a;border:1px solid #dcdcdc"></div>
<svg class="abs" style="left:64px;top:411px" width="13" height="13" viewBox="0 0 13 13" fill="none" stroke="#d6d6d6" stroke-width="1.2"><path d="M2.5 3.2 H8.2 V10.5"/><path d="M4.6 1 L2.2 3.2 L4.6 5.4 M6 8.4 L8.2 10.8 L10.4 8.4"/></svg>
<svg class="abs" style="left:27px;top:467px" width="18" height="15" viewBox="0 0 18 15" fill="none" stroke="#d6d6d6" stroke-width="1.2"><rect x="0.8" y="0.8" width="16.4" height="13.4"/><circle cx="9" cy="7.5" r="3.8" stroke-dasharray="1 1.4"/></svg>
<svg class="abs" style="left:60px;top:467px" width="18" height="15" viewBox="0 0 18 15" fill="none" stroke="#d6d6d6" stroke-width="1.2"><rect x="0.8" y="4" width="10.5" height="9.5"/><rect x="5.6" y="0.8" width="11.5" height="9" fill="#535353"/></svg>
<svg class="abs" style="left:79px;top:481px" width="3" height="3" viewBox="0 0 3 3"><path d="M3 0V3H0Z" fill="#c4c4c4"/></svg>
<!-- CANVAS -->
<div class="abs" style="left:88px;top:120px;width:841px;height:572px;background:#282828"></div>
<div class="abs" id="hr" style="left:88px;top:120px;width:841px;height:18px;background:#535353;overflow:hidden">
<i style="left:43px;top:0;height:18px"></i><b style="left:45px">800</b><i style="left:93px;top:0;height:18px"></i><b style="left:95px">600</b><i style="left:143px;top:0;height:18px"></i><b style="left:145px">400</b><i style="left:193px;top:0;height:18px"></i><b style="left:195px">200</b><i style="left:243px;top:0;height:18px"></i><b style="left:245px">0</b><i style="left:293px;top:0;height:18px"></i><b style="left:295px">200</b><i style="left:343px;top:0;height:18px"></i><b style="left:345px">400</b><i style="left:393px;top:0;height:18px"></i><b style="left:395px">600</b><i style="left:443px;top:0;height:18px"></i><b style="left:445px">800</b><i style="left:493px;top:0;height:18px"></i><b style="left:495px">1000</b><i style="left:543px;top:0;height:18px"></i><b style="left:545px">1200</b><i style="left:593px;top:0;height:18px"></i><b style="left:595px">1400</b><i style="left:643px;top:0;height:18px"></i><b style="left:645px">1600</b><i style="left:693px;top:0;height:18px"></i><b style="left:695px">1800</b><i style="left:743px;top:0;height:18px"></i><b style="left:745px">2000</b><i style="left:793px;top:0;height:18px"></i><b style="left:795px">2200</b><i style="left:3px;top:15px;height:3px;opacity:.4"></i><i style="left:8px;top:15px;height:3px;opacity:.4"></i><i style="left:13px;top:15px;height:3px;opacity:.4"></i><i style="left:18px;top:13px;height:5px;opacity:.4"></i><i style="left:23px;top:15px;height:3px;opacity:.4"></i><i style="left:28px;top:15px;height:3px;opacity:.4"></i><i style="left:33px;top:15px;height:3px;opacity:.4"></i><i style="left:38px;top:15px;height:3px;opacity:.4"></i><i style="left:48px;top:15px;height:3px;opacity:.4"></i><i style="left:53px;top:15px;height:3px;opacity:.4"></i><i style="left:58px;top:15px;height:3px;opacity:.4"></i><i style="left:63px;top:15px;height:3px;opacity:.4"></i><i style="left:68px;top:13px;height:5px;opacity:.4"></i><i style="left:73px;top:15px;height:3px;opacity:.4"></i><i style="left:78px;top:15px;height:3px;opacity:.4"></i><i style="left:83px;top:15px;height:3px;opacity:.4"></i><i style="left:88px;top:15px;height:3px;opacity:.4"></i><i style="left:98px;top:15px;height:3px;opacity:.4"></i><i style="left:103px;top:15px;height:3px;opacity:.4"></i><i style="left:108px;top:15px;height:3px;opacity:.4"></i><i style="left:113px;top:15px;height:3px;opacity:.4"></i><i style="left:118px;top:13px;height:5px;opacity:.4"></i><i style="left:123px;top:15px;height:3px;opacity:.4"></i><i style="left:128px;top:15px;height:3px;opacity:.4"></i><i style="left:133px;top:15px;height:3px;opacity:.4"></i><i style="left:138px;top:15px;height:3px;opacity:.4"></i><i style="left:148px;top:15px;height:3px;opacity:.4"></i><i style="left:153px;top:15px;height:3px;opacity:.4"></i><i style="left:158px;top:15px;height:3px;opacity:.4"></i><i style="left:163px;top:15px;height:3px;opacity:.4"></i><i style="left:168px;top:13px;height:5px;opacity:.4"></i><i style="left:173px;top:15px;height:3px;opacity:.4"></i><i style="left:178px;top:15px;height:3px;opacity:.4"></i><i style="left:183px;top:15px;height:3px;opacity:.4"></i><i style="left:188px;top:15px;height:3px;opacity:.4"></i><i style="left:198px;top:15px;height:3px;opacity:.4"></i><i style="left:203px;top:15px;height:3px;opacity:.4"></i><i style="left:208px;top:15px;height:3px;opacity:.4"></i><i style="left:213px;top:15px;height:3px;opacity:.4"></i><i style="left:218px;top:13px;height:5px;opacity:.4"></i><i style="left:223px;top:15px;height:3px;opacity:.4"></i><i style="left:228px;top:15px;height:3px;opacity:.4"></i><i style="left:233px;top:15px;height:3px;opacity:.4"></i><i style="left:238px;top:15px;height:3px;opacity:.4"></i><i style="left:248px;top:15px;height:3px;opacity:.4"></i><i style="left:253px;top:15px;height:3px;opacity:.4"></i><i style="left:258px;top:15px;height:3px;opacity:.4"></i><i style="left:263px;top:15px;height:3px;opacity:.4"></i><i style="left:268px;top:13px;height:5px;opacity:.4"></i><i style="left:273px;top:15px;height:3px;opacity:.4"></i><i style="left:278px;top:15px;height:3px;opacity:.4"></i><i style="left:283px;top:15px;height:3px;opacity:.4"></i><i style="left:288px;top:15px;height:3px;opacity:.4"></i><i style="left:298px;top:15px;height:3px;opacity:.4"></i><i style="left:303px;top:15px;height:3px;opacity:.4"></i><i style="left:308px;top:15px;height:3px;opacity:.4"></i><i style="left:313px;top:15px;height:3px;opacity:.4"></i><i style="left:318px;top:13px;height:5px;opacity:.4"></i><i style="left:323px;top:15px;height:3px;opacity:.4"></i><i style="left:328px;top:15px;height:3px;opacity:.4"></i><i style="left:333px;top:15px;height:3px;opacity:.4"></i><i style="left:338px;top:15px;height:3px;opacity:.4"></i><i style="left:348px;top:15px;height:3px;opacity:.4"></i><i style="left:353px;top:15px;height:3px;opacity:.4"></i><i style="left:358px;top:15px;height:3px;opacity:.4"></i><i style="left:363px;top:15px;height:3px;opacity:.4"></i><i style="left:368px;top:13px;height:5px;opacity:.4"></i><i style="left:373px;top:15px;height:3px;opacity:.4"></i><i style="left:378px;top:15px;height:3px;opacity:.4"></i><i style="left:383px;top:15px;height:3px;opacity:.4"></i><i style="left:388px;top:15px;height:3px;opacity:.4"></i><i style="left:398px;top:15px;height:3px;opacity:.4"></i><i style="left:403px;top:15px;height:3px;opacity:.4"></i><i style="left:408px;top:15px;height:3px;opacity:.4"></i><i style="left:413px;top:15px;height:3px;opacity:.4"></i><i style="left:418px;top:13px;height:5px;opacity:.4"></i><i style="left:423px;top:15px;height:3px;opacity:.4"></i><i style="left:428px;top:15px;height:3px;opacity:.4"></i><i style="left:433px;top:15px;height:3px;opacity:.4"></i><i style="left:438px;top:15px;height:3px;opacity:.4"></i><i style="left:448px;top:15px;height:3px;opacity:.4"></i><i style="left:453px;top:15px;height:3px;opacity:.4"></i><i style="left:458px;top:15px;height:3px;opacity:.4"></i><i style="left:463px;top:15px;height:3px;opacity:.4"></i><i style="left:468px;top:13px;height:5px;opacity:.4"></i><i style="left:473px;top:15px;height:3px;opacity:.4"></i><i style="left:478px;top:15px;height:3px;opacity:.4"></i><i style="left:483px;top:15px;height:3px;opacity:.4"></i><i style="left:488px;top:15px;height:3px;opacity:.4"></i><i style="left:498px;top:15px;height:3px;opacity:.4"></i><i style="left:503px;top:15px;height:3px;opacity:.4"></i><i style="left:508px;top:15px;height:3px;opacity:.4"></i><i style="left:513px;top:15px;height:3px;opacity:.4"></i><i style="left:518px;top:13px;height:5px;opacity:.4"></i><i style="left:523px;top:15px;height:3px;opacity:.4"></i><i style="left:528px;top:15px;height:3px;opacity:.4"></i><i style="left:533px;top:15px;height:3px;opacity:.4"></i><i style="left:538px;top:15px;height:3px;opacity:.4"></i><i style="left:548px;top:15px;height:3px;opacity:.4"></i><i style="left:553px;top:15px;height:3px;opacity:.4"></i><i style="left:558px;top:15px;height:3px;opacity:.4"></i><i style="left:563px;top:15px;height:3px;opacity:.4"></i><i style="left:568px;top:13px;height:5px;opacity:.4"></i><i style="left:573px;top:15px;height:3px;opacity:.4"></i><i style="left:578px;top:15px;height:3px;opacity:.4"></i><i style="left:583px;top:15px;height:3px;opacity:.4"></i><i style="left:588px;top:15px;height:3px;opacity:.4"></i><i style="left:598px;top:15px;height:3px;opacity:.4"></i><i style="left:603px;top:15px;height:3px;opacity:.4"></i><i style="left:608px;top:15px;height:3px;opacity:.4"></i><i style="left:613px;top:15px;height:3px;opacity:.4"></i><i style="left:618px;top:13px;height:5px;opacity:.4"></i><i style="left:623px;top:15px;height:3px;opacity:.4"></i><i style="left:628px;top:15px;height:3px;opacity:.4"></i><i style="left:633px;top:15px;height:3px;opacity:.4"></i><i style="left:638px;top:15px;height:3px;opacity:.4"></i><i style="left:648px;top:15px;height:3px;opacity:.4"></i><i style="left:653px;top:15px;height:3px;opacity:.4"></i><i style="left:658px;top:15px;height:3px;opacity:.4"></i><i style="left:663px;top:15px;height:3px;opacity:.4"></i><i style="left:668px;top:13px;height:5px;opacity:.4"></i><i style="left:673px;top:15px;height:3px;opacity:.4"></i><i style="left:678px;top:15px;height:3px;opacity:.4"></i><i style="left:683px;top:15px;height:3px;opacity:.4"></i><i style="left:688px;top:15px;height:3px;opacity:.4"></i><i style="left:698px;top:15px;height:3px;opacity:.4"></i><i style="left:703px;top:15px;height:3px;opacity:.4"></i><i style="left:708px;top:15px;height:3px;opacity:.4"></i><i style="left:713px;top:15px;height:3px;opacity:.4"></i><i style="left:718px;top:13px;height:5px;opacity:.4"></i><i style="left:723px;top:15px;height:3px;opacity:.4"></i><i style="left:728px;top:15px;height:3px;opacity:.4"></i><i style="left:733px;top:15px;height:3px;opacity:.4"></i><i style="left:738px;top:15px;height:3px;opacity:.4"></i><i style="left:748px;top:15px;height:3px;opacity:.4"></i><i style="left:753px;top:15px;height:3px;opacity:.4"></i><i style="left:758px;top:15px;height:3px;opacity:.4"></i><i style="left:763px;top:15px;height:3px;opacity:.4"></i><i style="left:768px;top:13px;height:5px;opacity:.4"></i><i style="left:773px;top:15px;height:3px;opacity:.4"></i><i style="left:778px;top:15px;height:3px;opacity:.4"></i><i style="left:783px;top:15px;height:3px;opacity:.4"></i><i style="left:788px;top:15px;height:3px;opacity:.4"></i><i style="left:798px;top:15px;height:3px;opacity:.4"></i><i style="left:803px;top:15px;height:3px;opacity:.4"></i><i style="left:808px;top:15px;height:3px;opacity:.4"></i><i style="left:813px;top:15px;height:3px;opacity:.4"></i><i style="left:818px;top:13px;height:5px;opacity:.4"></i><i style="left:823px;top:15px;height:3px;opacity:.4"></i><i style="left:828px;top:15px;height:3px;opacity:.4"></i><i style="left:833px;top:15px;height:3px;opacity:.4"></i><i style="left:838px;top:15px;height:3px;opacity:.4"></i></div>
<div class="abs" id="vr" style="left:88px;top:138px;width:20px;height:554px;background:#535353;overflow:hidden">
<i style="top:-22px;left:0;width:20px;height:1px"></i><b style="left:4px;top:-20.5px">2</b><b style="left:4px;top:-8.3px">0</b><b style="left:4px;top:3.9px">0</b><i style="top:28px;left:0;width:20px;height:1px"></i><b style="left:4px;top:29.5px">0</b><i style="top:78px;left:0;width:20px;height:1px"></i><b style="left:4px;top:79.5px">2</b><b style="left:4px;top:91.7px">0</b><b style="left:4px;top:103.9px">0</b><i style="top:128px;left:0;width:20px;height:1px"></i><b style="left:4px;top:129.5px">4</b><b style="left:4px;top:141.7px">0</b><b style="left:4px;top:153.9px">0</b><i style="top:178px;left:0;width:20px;height:1px"></i><b style="left:4px;top:179.5px">6</b><b style="left:4px;top:191.7px">0</b><b style="left:4px;top:203.9px">0</b><i style="top:228px;left:0;width:20px;height:1px"></i><b style="left:4px;top:229.5px">8</b><b style="left:4px;top:241.7px">0</b><b style="left:4px;top:253.9px">0</b><i style="top:278px;left:0;width:20px;height:1px"></i><b style="left:4px;top:277.7px">1</b><b style="left:4px;top:288.6px">0</b><b style="left:4px;top:299.5px">0</b><b style="left:4px;top:310.4px">0</b><i style="top:328px;left:0;width:20px;height:1px"></i><b style="left:4px;top:327.7px">1</b><b style="left:4px;top:338.6px">2</b><b style="left:4px;top:349.5px">0</b><b style="left:4px;top:360.4px">0</b><i style="top:378px;left:0;width:20px;height:1px"></i><b style="left:4px;top:377.7px">1</b><b style="left:4px;top:388.6px">4</b><b style="left:4px;top:399.5px">0</b><b style="left:4px;top:410.4px">0</b><i style="top:428px;left:0;width:20px;height:1px"></i><b style="left:4px;top:427.7px">1</b><b style="left:4px;top:438.6px">6</b><b style="left:4px;top:449.5px">0</b><b style="left:4px;top:460.4px">0</b><i style="top:478px;left:0;width:20px;height:1px"></i><b style="left:4px;top:477.7px">1</b><b style="left:4px;top:488.6px">8</b><b style="left:4px;top:499.5px">0</b><b style="left:4px;top:510.4px">0</b><i style="top:528px;left:0;width:20px;height:1px"></i><b style="left:4px;top:527.7px">2</b><b style="left:4px;top:538.6px">0</b><b style="left:4px;top:549.5px">0</b><b style="left:4px;top:560.4px">0</b><i style="top:578px;left:0;width:20px;height:1px"></i><b style="left:4px;top:577.7px">2</b><b style="left:4px;top:588.6px">2</b><b style="left:4px;top:599.5px">0</b><b style="left:4px;top:610.4px">0</b><i style="top:3px;left:15px;width:5px;height:1px;opacity:.4"></i><i style="top:8px;left:17px;width:3px;height:1px;opacity:.4"></i><i style="top:13px;left:17px;width:3px;height:1px;opacity:.4"></i><i style="top:18px;left:17px;width:3px;height:1px;opacity:.4"></i><i style="top:23px;left:17px;width:3px;height:1px;opacity:.4"></i><i style="top:33px;left:17px;width:3px;height:1px;opacity:.4"></i><i style="top:38px;left:17px;width:3px;height:1px;opacity:.4"></i><i style="top:43px;left:17px;width:3px;height:1px;opacity:.4"></i><i style="top:48px;left:17px;width:3px;height:1px;opacity:.4"></i><i style="top:53px;left:15px;width:5px;height:1px;opacity:.4"></i><i style="top:58px;left:17px;width:3px;height:1px;opacity:.4"></i><i style="top:63px;left:17px;width:3px;height:1px;opacity:.4"></i><i style="top:68px;left:17px;width:3px;height:1px;opacity:.4"></i><i style="top:73px;left:17px;width:3px;height:1px;opacity:.4"></i><i style="top:83px;left:17px;width:3px;height:1px;opacity:.4"></i><i style="top:88px;left:17px;width:3px;height:1px;opacity:.4"></i><i style="top:93px;left:17px;width:3px;height:1px;opacity:.4"></i><i style="top:98px;left:17px;width:3px;height:1px;opacity:.4"></i><i style="top:103px;left:15px;width:5px;height:1px;opacity:.4"></i><i style="top:108px;left:17px;width:3px;height:1px;opacity:.4"></i><i style="top:113px;left:17px;width:3px;height:1px;opacity:.4"></i><i style="top:118px;left:17px;width:3px;height:1px;opacity:.4"></i><i style="top:123px;left:17px;width:3px;height:1px;opacity:.4"></i><i style="top:133px;left:17px;width:3px;height:1px;opacity:.4"></i><i style="top:138px;left:17px;width:3px;height:1px;opacity:.4"></i><i style="top:143px;left:17px;width:3px;height:1px;opacity:.4"></i><i style="top:148px;left:17px;width:3px;height:1px;opacity:.4"></i><i style="top:153px;left:15px;width:5px;height:1px;opacity:.4"></i><i style="top:158px;left:17px;width:3px;height:1px;opacity:.4"></i><i style="top:163px;left:17px;width:3px;height:1px;opacity:.4"></i><i style="top:168px;left:17px;width:3px;height:1px;opacity:.4"></i><i style="top:173px;left:17px;width:3px;height:1px;opacity:.4"></i><i style="top:183px;left:17px;width:3px;height:1px;opacity:.4"></i><i style="top:188px;left:17px;width:3px;height:1px;opacity:.4"></i><i style="top:193px;left:17px;width:3px;height:1px;opacity:.4"></i><i style="top:198px;left:17px;width:3px;height:1px;opacity:.4"></i><i style="top:203px;left:15px;width:5px;height:1px;opacity:.4"></i><i style="top:208px;left:17px;width:3px;height:1px;opacity:.4"></i><i style="top:213px;left:17px;width:3px;height:1px;opacity:.4"></i><i style="top:218px;left:17px;width:3px;height:1px;opacity:.4"></i><i style="top:223px;left:17px;width:3px;height:1px;opacity:.4"></i><i style="top:233px;left:17px;width:3px;height:1px;opacity:.4"></i><i style="top:238px;left:17px;width:3px;height:1px;opacity:.4"></i><i style="top:243px;left:17px;width:3px;height:1px;opacity:.4"></i><i style="top:248px;left:17px;width:3px;height:1px;opacity:.4"></i><i style="top:253px;left:15px;width:5px;height:1px;opacity:.4"></i><i style="top:258px;left:17px;width:3px;height:1px;opacity:.4"></i><i style="top:263px;left:17px;width:3px;height:1px;opacity:.4"></i><i style="top:268px;left:17px;width:3px;height:1px;opacity:.4"></i><i style="top:273px;left:17px;width:3px;height:1px;opacity:.4"></i><i style="top:283px;left:17px;width:3px;height:1px;opacity:.4"></i><i style="top:288px;left:17px;width:3px;height:1px;opacity:.4"></i><i style="top:293px;left:17px;width:3px;height:1px;opacity:.4"></i><i style="top:298px;left:17px;width:3px;height:1px;opacity:.4"></i><i style="top:303px;left:15px;width:5px;height:1px;opacity:.4"></i><i style="top:308px;left:17px;width:3px;height:1px;opacity:.4"></i><i style="top:313px;left:17px;width:3px;height:1px;opacity:.4"></i><i style="top:318px;left:17px;width:3px;height:1px;opacity:.4"></i><i style="top:323px;left:17px;width:3px;height:1px;opacity:.4"></i><i style="top:333px;left:17px;width:3px;height:1px;opacity:.4"></i><i style="top:338px;left:17px;width:3px;height:1px;opacity:.4"></i><i style="top:343px;left:17px;width:3px;height:1px;opacity:.4"></i><i style="top:348px;left:17px;width:3px;height:1px;opacity:.4"></i><i style="top:353px;left:15px;width:5px;height:1px;opacity:.4"></i><i style="top:358px;left:17px;width:3px;height:1px;opacity:.4"></i><i style="top:363px;left:17px;width:3px;height:1px;opacity:.4"></i><i style="top:368px;left:17px;width:3px;height:1px;opacity:.4"></i><i style="top:373px;left:17px;width:3px;height:1px;opacity:.4"></i><i style="top:383px;left:17px;width:3px;height:1px;opacity:.4"></i><i style="top:388px;left:17px;width:3px;height:1px;opacity:.4"></i><i style="top:393px;left:17px;width:3px;height:1px;opacity:.4"></i><i style="top:398px;left:17px;width:3px;height:1px;opacity:.4"></i><i style="top:403px;left:15px;width:5px;height:1px;opacity:.4"></i><i style="top:408px;left:17px;width:3px;height:1px;opacity:.4"></i><i style="top:413px;left:17px;width:3px;height:1px;opacity:.4"></i><i style="top:418px;left:17px;width:3px;height:1px;opacity:.4"></i><i style="top:423px;left:17px;width:3px;height:1px;opacity:.4"></i><i style="top:433px;left:17px;width:3px;height:1px;opacity:.4"></i><i style="top:438px;left:17px;width:3px;height:1px;opacity:.4"></i><i style="top:443px;left:17px;width:3px;height:1px;opacity:.4"></i><i style="top:448px;left:17px;width:3px;height:1px;opacity:.4"></i><i style="top:453px;left:15px;width:5px;height:1px;opacity:.4"></i><i style="top:458px;left:17px;width:3px;height:1px;opacity:.4"></i><i style="top:463px;left:17px;width:3px;height:1px;opacity:.4"></i><i style="top:468px;left:17px;width:3px;height:1px;opacity:.4"></i><i style="top:473px;left:17px;width:3px;height:1px;opacity:.4"></i><i style="top:483px;left:17px;width:3px;height:1px;opacity:.4"></i><i style="top:488px;left:17px;width:3px;height:1px;opacity:.4"></i><i style="top:493px;left:17px;width:3px;height:1px;opacity:.4"></i><i style="top:498px;left:17px;width:3px;height:1px;opacity:.4"></i><i style="top:503px;left:15px;width:5px;height:1px;opacity:.4"></i><i style="top:508px;left:17px;width:3px;height:1px;opacity:.4"></i><i style="top:513px;left:17px;width:3px;height:1px;opacity:.4"></i><i style="top:518px;left:17px;width:3px;height:1px;opacity:.4"></i><i style="top:523px;left:17px;width:3px;height:1px;opacity:.4"></i><i style="top:533px;left:17px;width:3px;height:1px;opacity:.4"></i><i style="top:538px;left:17px;width:3px;height:1px;opacity:.4"></i><i style="top:543px;left:17px;width:3px;height:1px;opacity:.4"></i><i style="top:548px;left:17px;width:3px;height:1px;opacity:.4"></i><i style="top:553px;left:15px;width:5px;height:1px;opacity:.4"></i></div>
<div class="abs" style="left:88px;top:120px;width:20px;height:18px;background:#535353"></div>
<div class="abs" style="left:88px;top:138px;width:841px;height:1px;background:#2e2e2e;opacity:.6"></div>
<div class="abs" style="left:331px;top:166px;width:375px;height:500px;background:#000;border-right:1px solid #f2f2f2;border-bottom:1px solid #f2f2f2"></div>
<div class="abs" style="left:368px;top:241px;width:300px;height:350px;background:#fff"></div>
<span class="t doc" id="ttl" style="-webkit-text-stroke:0.35px #fff;left:418px;top:187px;font-size:20px;line-height:24px;letter-spacing:-0.4px;transform-origin:0 50%;transform:scaleX(.912)">COLOR VALUE SCALE</span>
<span class="t doc vl" style="top:266px">T</span><span class="t doc vl" style="top:286px">I</span><span class="t doc vl" style="top:306px">N</span><span class="t doc vl" style="top:326px">T</span><span class="t doc vl" style="top:346px">S</span>
<span class="t doc vl" style="top:458px">H</span><span class="t doc vl" style="top:478px">U</span><span class="t doc vl" style="top:498px">E</span><span class="t doc vl" style="top:518px">S</span>
<span class="t doc tiny" style="left:330.5px;width:37px;top:408.2px">Saturated<br>Color</span>
<span class="t doc tiny" style="left:672px;top:411px;text-align:left">Intense<br>Color</span>
<span class="t doc hl" style="left:389px">RED</span><span class="t doc hl" style="left:424px">ORANGE</span><span class="t doc hl" style="left:477px">YELLOW</span><span class="t doc hl" style="left:527px">GREEN</span><span class="t doc hl" style="left:576px">BLUE</span><span class="t doc hl" style="left:625px">VIOLET</span>
<div class="abs gh" style="top:289px"></div><div class="abs gh w" style="top:289px"></div><div class="abs gh" style="top:339px"></div><div class="abs gh w" style="top:339px"></div><div class="abs gh" style="top:389px"></div><div class="abs gh w" style="top:389px"></div><div class="abs gh" style="top:441px"></div><div class="abs gh w" style="top:441px"></div><div class="abs gh" style="top:488px"></div><div class="abs gh w" style="top:488px"></div><div class="abs gh" style="top:539px"></div><div class="abs gh w" style="top:539px"></div>
<div class="abs gv" style="left:418px"></div><div class="abs gv w" style="left:418px"></div><div class="abs gv" style="left:468px"></div><div class="abs gv w" style="left:468px"></div><div class="abs gv" style="left:518px"></div><div class="abs gv w" style="left:518px"></div><div class="abs gv" style="left:568px"></div><div class="abs gv w" style="left:568px"></div><div class="abs gv" style="left:618px"></div><div class="abs gv w" style="left:618px"></div>
<div class="abs" style="left:88px;top:692px;width:841px;height:19px;background:#4a4a4a"></div>
<div class="abs" style="left:88px;top:692px;width:50px;height:19px;background:#535353"></div>
<div class="abs" style="left:139px;top:692px;width:181px;height:19px;background:#595959"></div>
<span class="t" style="left:104px;top:695px;font-size:10.5px;color:#e6e6e6;letter-spacing:-0.2px">25%</span>
<span class="t" style="left:162px;top:695px;font-size:10.5px;color:#e6e6e6;letter-spacing:-0.3px">1500 px x 2000 px (200 ppi)</span>
<svg class="abs" style="left:310px;top:696px" width="7" height="11" viewBox="0 0 7 11"><path d="M1.2 0.8 L5.5 5.5 L1.2 10.2" stroke="#d0d0d0" stroke-width="1.2" fill="none"/></svg>
<div class="abs" style="left:929px;top:120px;width:17px;height:591px;background:#4a4a4a"></div>
<!-- DOCKS -->
<div class="abs" style="left:946px;top:91px;width:2px;height:620px;background:#3b3b3b"></div>
<div class="abs" style="left:986px;top:91px;width:2px;height:620px;background:#3b3b3b"></div>
<div class="abs" style="left:1026px;top:91px;width:2px;height:620px;background:#3b3b3b"></div>
<svg class="abs" style="left:971px;top:94px" width="9" height="7" viewBox="0 0 9 7"><path d="M3.6 0.6 L0.9 3.5 L3.6 6.4 M7.8 0.6 L5.1 3.5 L7.8 6.4" stroke="#e2e2e2" stroke-width="1.1" fill="none"/></svg>
<svg class="abs" style="left:1011px;top:94px" width="9" height="7" viewBox="0 0 9 7"><path d="M3.6 0.6 L0.9 3.5 L3.6 6.4 M7.8 0.6 L5.1 3.5 L7.8 6.4" stroke="#e2e2e2" stroke-width="1.1" fill="none"/></svg>
<svg class="abs" style="left:1298px;top:94px" width="9" height="7" viewBox="0 0 9 7"><path d="M1.2 0.6 L3.9 3.5 L1.2 6.4 M5.4 0.6 L8.1 3.5 L5.4 6.4" stroke="#e2e2e2" stroke-width="1.1" fill="none"/></svg>
<div class="abs" style="left:948px;top:171px;width:38px;height:1px;background:#3e3e3e"></div>
<div class="abs" style="left:948px;top:212px;width:38px;height:1px;background:#3e3e3e"></div>
<div class="abs" style="left:948px;top:282px;width:38px;height:1px;background:#3e3e3e"></div>
<div class="abs" style="left:948px;top:351px;width:38px;height:1px;background:#3e3e3e"></div>
<div class="abs" style="left:948px;top:393px;width:38px;height:1px;background:#3e3e3e"></div>
<div class="abs" style="left:988px;top:171px;width:38px;height:1px;background:#3e3e3e"></div>
<div class="abs" style="left:957px;top:108px;width:20px;height:3px;background:#4b4b4b"></div>
<div class="abs" style="left:957px;top:176px;width:20px;height:3px;background:#4b4b4b"></div>
<div class="abs" style="left:957px;top:217px;width:20px;height:3px;background:#4b4b4b"></div>
<div class="abs" style="left:957px;top:287px;width:20px;height:3px;background:#4b4b4b"></div>
<div class="abs" style="left:957px;top:356px;width:20px;height:3px;background:#4b4b4b"></div>
<div class="abs" style="left:997px;top:108px;width:20px;height:3px;background:#4b4b4b"></div>
<svg class="abs" style="left:956px;top:115px" width="22" height="22" viewBox="0 0 22 22" fill="none" stroke="#d4d4d4" stroke-width="1.3" stroke-linecap="round" stroke-linejoin="round"><rect x="3.5" y="3" width="4" height="4" stroke-width="1"/><rect x="3.5" y="9" width="4" height="4" stroke-width="1"/><rect x="3" y="14.5" width="5" height="5" fill="#d4d4d4" stroke="none"/><path d="M12 18 C17 15 17.5 9 14.5 5.5" stroke-width="2"/><path d="M11 6.5 L15.8 3.2 L16.5 8.8Z" fill="#d4d4d4" stroke="none"/></svg>
<svg class="abs" style="left:956px;top:144px" width="22" height="22" viewBox="0 0 22 22" fill="none" stroke="#d4d4d4" stroke-width="1.3" stroke-linecap="round" stroke-linejoin="round"><path d="M4 3.5 L18 11 L4 18.5Z" fill="#d4d4d4" stroke="none"/></svg>
<svg class="abs" style="left:956px;top:185px" width="22" height="22" viewBox="0 0 22 22" fill="none" stroke="#d4d4d4" stroke-width="1.3" stroke-linecap="round" stroke-linejoin="round"><path d="M4 12.5 L9.5 3 L15 12.5Z" fill="#d4d4d4" stroke="none"/><path d="M13 7.5 A5.5 5.5 0 1 1 8.5 15.5" stroke-width="1.8"/></svg>
<span class="t" style="left:959.5px;top:227px;font-size:17px;line-height:20px;color:#d4d4d4;-webkit-text-stroke:0.35px #d4d4d4">A</span><div class="abs" style="left:973px;top:227px;width:1.5px;height:18px;background:#d4d4d4"></div>
<svg class="abs" style="left:961px;top:257px" width="12" height="16" viewBox="0 0 12 16" preserveAspectRatio="none"><path d="M6.2 0.5 H11.5 V2 H10.3 V15.5 H8.9 V2 H7.6 V15.5 H6.2 V8 A3.75 3.75 0 0 1 6.2 0.5Z" fill="#d4d4d4"/></svg>
<svg class="abs" style="left:962.5px;top:296px" width="12" height="15" viewBox="0 0 12 16" preserveAspectRatio="none"><path d="M6.2 0.5 H11.5 V2 H10.3 V15.5 H8.9 V2 H7.6 V15.5 H6.2 V8 A3.75 3.75 0 0 1 6.2 0.5Z" fill="#d4d4d4"/></svg>
<svg class="abs" style="left:957px;top:304.5px" width="11" height="11" viewBox="0 0 12 12" fill="none" stroke="#d4d4d4" stroke-width="1.2"><rect x="0.7" y="0.7" width="6" height="6"/><rect x="4" y="4" width="6.5" height="6.5" fill="#d4d4d4"/></svg>
<span class="t" style="left:965px;top:323px;font-size:16px;line-height:18px;color:#d4d4d4;-webkit-text-stroke:0.3px #d4d4d4">A</span>
<svg class="abs" style="left:957px;top:332.5px" width="10" height="10" viewBox="0 0 11 11" fill="none" stroke="#d4d4d4" stroke-width="1.2"><rect x="0.7" y="3.5" width="6" height="6"/><rect x="4.5" y="0.7" width="4" height="4" fill="#d4d4d4" stroke="none"/></svg>
<svg class="abs" style="left:956px;top:363px" width="22" height="22" viewBox="0 0 22 22" fill="none" stroke="#d4d4d4" stroke-width="1.3" stroke-linecap="round" stroke-linejoin="round"><path d="M11 2.5 L18.5 6.3 V15.3 L11 19.5 L3.5 15.3 V6.3Z" fill="#6a6a6a"/><path d="M3.5 6.3 L11 10.3 L18.5 6.3 M11 10.3 V19.5"/><path d="M11 10.3 L18.5 6.3 V15.3 L11 19.5Z" fill="#d4d4d4" stroke="none" opacity=".85"/></svg>
<svg class="abs" style="left:996px;top:115px" width="22" height="22" viewBox="0 0 22 22" fill="none" stroke="#d4d4d4" stroke-width="1.3" stroke-linecap="round" stroke-linejoin="round"><path d="M2.5 4H4M2.5 7.5H4M2.5 11H4" stroke-width="1.3"/><path d="M6 4H10.5M6 7.5H10.5M6 11H9" stroke-width="1.1"/><path d="M19.5 5 L12.5 13" stroke-width="2.6"/><path d="M12.3 13 C13.8 14.5 12.5 17.5 6.5 18.5 C8 16.5 8 14 9.5 13 C10.3 12.5 11.5 12.3 12.3 13Z" fill="#d4d4d4" stroke="none"/></svg>
<svg class="abs" style="left:996px;top:144px" width="22" height="22" viewBox="0 0 22 22" fill="none" stroke="#d4d4d4" stroke-width="1.3" stroke-linecap="round" stroke-linejoin="round"><path d="M10.5 8.5 H19.5 M3 14.5 H12" stroke-width="1.8" stroke-linecap="butt"/><path d="M10.8 8.5 C8.5 11 5 10.5 2.5 6.8 C5.5 5.5 9 5.5 10.8 8.5Z" fill="#d4d4d4" stroke="none"/><path d="M12 14.5 C13.5 11.5 16 10.5 19.5 10.8 V18.2 C16 18.5 13.5 17.5 12 14.5Z" fill="#d4d4d4" stroke="none"/></svg>
<!-- PANELS -->
<div class="abs" style="left:1028px;top:104px;width:285px;height:607px;background:#535353"></div>
<div class="abs" style="left:1313px;top:91px;width:1px;height:620px;background:#3d3d3d"></div>
<div class="abs" style="left:1028px;top:104px;width:285px;height:27px;background:#424242"></div>
<div class="abs" style="left:1028px;top:104px;width:43px;height:27px;background:#535353"></div>
<div class="abs" style="left:1071px;top:104px;width:1px;height:26px;background:#383838"></div>
<div class="abs" style="left:1132px;top:104px;width:1px;height:26px;background:#383838"></div>
<div class="abs" style="left:1193px;top:104px;width:1px;height:26px;background:#383838"></div>
<div class="abs" style="left:1250px;top:104px;width:1px;height:26px;background:#383838"></div>
<span class="t ptab on" style="left:1037px;top:110px">Color</span>
<span class="t ptab" style="left:1079px;top:110px">Swatches</span>
<span class="t ptab" style="left:1140px;top:110px">Gradients</span>
<span class="t ptab" style="left:1203px;top:110px">Patterns</span>
<svg class="abs" style="left:1297px;top:114px" width="11" height="8" viewBox="0 0 11 8"><path d="M0 0.6H11M0 2.9H11M0 5.2H11M0 7.5H11" stroke="#cfcfcf" stroke-width="1"/></svg>
<div class="abs" style="left:1048px;top:153px;width:18px;height:18px;background:#f4f4f4"></div>
<div class="abs" style="left:1036px;top:142px;width:22px;height:21px;background:#3c3c3c"></div>
<div class="abs" style="left:1037px;top:143px;width:20px;height:19px;background:linear-gradient(90deg,#a02382,#8f1d78);border:1px solid #f0f0f0"></div>
<div class="abs" style="left:1073px;top:139px;width:187px;height:254px;background:linear-gradient(to bottom,rgba(0,0,0,0) 0%,rgba(0,0,0,1) 100%),linear-gradient(to right,#ffffff 0%,#fdd5f3 10%,#fbafe9 20%,#f98ddf 30%,#f86ed7 40%,#f653cf 50%,#f53cc9 60%,#f42ac4 70%,#f41bc0 80%,#f312bd 90%,#f30ebc 100%)"></div>
<div class="abs" style="left:1213px;top:239px;width:11px;height:11px;border:1.3px solid #f0f0f0;border-radius:50%"></div>
<div class="abs" style="left:1277px;top:139px;width:19px;height:254px;background:linear-gradient(to bottom,#ff0000 0%,#ff00ff 16.6%,#0000ff 33.3%,#00ffff 50%,#00ff00 66.6%,#ffff00 83.3%,#ff0000 100%)"></div>
<svg class="abs" style="left:1267px;top:160px" width="7" height="9" viewBox="0 0 7 9"><path d="M0.5 1.5 Q0.5 0.5 1.5 0.8 L6.5 4.5 L1.5 8.2 Q0.5 8.5 0.5 7.5Z" fill="#ececec"/></svg>
<div class="abs" style="left:1028px;top:414px;width:285px;height:3px;background:#3f3f3f"></div>
<div class="abs" style="left:1028px;top:417px;width:285px;height:27px;background:#424242"></div>
<div class="abs" style="left:1028px;top:417px;width:48px;height:27px;background:#535353"></div>
<div class="abs" style="left:1076px;top:417px;width:1px;height:26px;background:#383838"></div>
<span class="t ptab on" style="left:1037px;top:423px">Layers</span>
<svg class="abs" style="left:1297px;top:427px" width="11" height="8" viewBox="0 0 11 8"><path d="M0 0.6H11M0 2.9H11M0 5.2H11M0 7.5H11" stroke="#cfcfcf" stroke-width="1"/></svg>
<div class="abs fld" style="left:1032px;top:454px;width:86px;height:19px"></div>
<svg class="abs" style="left:1039px;top:457px" width="12" height="13" viewBox="0 0 12 13" fill="none" stroke="#dcdcdc"><circle cx="4.8" cy="4.8" r="3.6" stroke-width="1.3"/><path d="M7.4 7.6 L11 11.5" stroke-width="1.8"/></svg>
<span class="t" style="left:1054px;top:457px;font-size:10.5px;letter-spacing:-0.3px">Kind</span>
<svg class="abs" style="left:1105px;top:461px" width="9" height="6" viewBox="0 0 9 6"><path d="M0.8 0.8 L4.5 4.6 L8.2 0.8" stroke="#c8c8c8" stroke-width="1.1" fill="none"/></svg>
<svg class="abs" style="left:1127px;top:455px" width="16" height="16" viewBox="0 0 16 16" fill="none" stroke="#dcdcdc" stroke-width="1.2" stroke-linejoin="round"><rect x="1.8" y="3" width="12.4" height="10"/><path d="M4 11 L6.8 7 L8.6 9.2 L10 7.8 L12 11Z" fill="#dcdcdc" stroke="none"/></svg>
<svg class="abs" style="left:1152px;top:455px" width="16" height="16" viewBox="0 0 16 16" fill="none" stroke="#dcdcdc" stroke-width="1.2" stroke-linejoin="round"><circle cx="8" cy="8" r="5.6"/><path d="M4 12 A5.6 5.6 0 0 0 12 4Z" fill="#dcdcdc" stroke="none"/></svg>
<span class="t" style="left:1178px;top:454px;font-family:'Liberation Serif',serif;font-weight:bold;font-size:17px;line-height:18px;color:#dcdcdc">T</span>
<svg class="abs" style="left:1200px;top:455px" width="16" height="16" viewBox="0 0 16 16" fill="none" stroke="#dcdcdc" stroke-width="1.2" stroke-linejoin="round"><rect x="3" y="3.5" width="10" height="9"/><rect x="1.5" y="2" width="3" height="3" fill="#dcdcdc" stroke="none"/><rect x="11.5" y="2" width="3" height="3" fill="#dcdcdc" stroke="none"/><rect x="1.5" y="11" width="3" height="3" fill="#dcdcdc" stroke="none"/><rect x="11.5" y="11" width="3" height="3" fill="#dcdcdc" stroke="none"/></svg>
<svg class="abs" style="left:1224px;top:455px" width="16" height="16" viewBox="0 0 16 16" fill="none" stroke="#dcdcdc" stroke-width="1.2" stroke-linejoin="round"><path d="M4 2 H9.5 L13 5.5 V14 H4Z"/><path d="M9.5 2 V5.5 H13"/><rect x="2.5" y="9" width="6" height="5.5" fill="#dcdcdc" stroke="none"/></svg>
<div class="abs" style="left:1250px;top:455px;width:9px;height:17px;border-radius:5px;background:#474747"></div><div class="abs" style="left:1250px;top:455px;width:9px;height:9px;border-radius:50%;background:#d2d2d2"></div>
<div class="abs" style="left:1028px;top:476px;width:285px;height:1px;background:#444"></div>
<div class="abs fld" style="left:1032px;top:482px;width:128px;height:19px"></div>
<span class="t" style="left:1040px;top:485px;font-size:10.5px;letter-spacing:-0.3px">Normal</span>
<svg class="abs" style="left:1147px;top:489px" width="9" height="6" viewBox="0 0 9 6"><path d="M0.8 0.8 L4.5 4.6 L8.2 0.8" stroke="#c8c8c8" stroke-width="1.1" fill="none"/></svg>
<span class="t" style="left:1167px;top:485px;font-size:10.5px;letter-spacing:-0.3px">Opacity:</span>
<div class="abs fld" style="left:1208px;top:482px;width:35px;height:19px;background:#454545"></div>
<span class="t" style="left:1213px;top:485px;font-size:10.5px;letter-spacing:-0.3px">100%</span>
<div class="abs fld" style="left:1243px;top:482px;width:15px;height:19px;background:#4c4c4c"></div>
<svg class="abs" style="left:1246px;top:489px" width="9" height="6" viewBox="0 0 9 6"><path d="M0.8 0.8 L4.5 4.6 L8.2 0.8" stroke="#c8c8c8" stroke-width="1.1" fill="none"/></svg>
<div class="abs" style="left:1028px;top:504px;width:285px;height:1px;background:#444"></div>
<span class="t" style="left:1034px;top:512px;font-size:10.5px;letter-spacing:-0.3px">Lock:</span>
<svg class="abs" style="left:1066px;top:513px" width="12" height="12" viewBox="0 0 12 12"><rect x="0.5" y="0.5" width="11" height="11" fill="none" stroke="#dcdcdc"/><path d="M1 1H4.3V4.3H1ZM7.6 1H11V4.3H7.6ZM4.3 4.3H7.6V7.6H4.3ZM1 7.6H4.3V11H1ZM7.6 7.6H11V11H7.6Z" fill="#dcdcdc"/></svg>
<svg class="abs" style="left:1087px;top:511px" width="16" height="16" viewBox="0 0 16 16" fill="none" stroke="#dcdcdc" stroke-width="1.2" stroke-linejoin="round"><path d="M13.5 2 L7.5 9" stroke-width="2.2" stroke-linecap="round"/><path d="M7.3 9 C8.5 10.2 7.5 13 2.5 14 C3.8 12.3 3.5 10.3 5 9.3 C5.8 8.8 6.7 8.6 7.3 9Z" fill="#dcdcdc" stroke="none"/></svg>
<svg class="abs" style="left:1108px;top:511px" width="16" height="16" viewBox="0 0 16 16" fill="none" stroke="#dcdcdc" stroke-width="1.2" stroke-linejoin="round"><path d="M8 2.5V13.5M2.5 8H13.5" stroke-width="1.2"/><path d="M8 0.8 L10.2 3.6 H5.8Z M8 15.2 L10.2 12.4 H5.8Z M0.8 8 L3.6 5.8 V10.2Z M15.2 8 L12.4 5.8 V10.2Z" fill="#dcdcdc" stroke="none"/></svg>
<svg class="abs" style="left:1131px;top:511px" width="16" height="16" viewBox="0 0 16 16" fill="none" stroke="#dcdcdc" stroke-width="1.2" stroke-linejoin="round"><path d="M4 1V12H15M1 4H12V15" stroke-width="1.2"/><path d="M9 2 L13.5 2.5 L14 7" stroke-width="1" stroke-dasharray="1.5 1.2"/></svg>
<svg class="abs" style="left:1153px;top:511px" width="16" height="16" viewBox="0 0 16 16" fill="none" stroke="#dcdcdc" stroke-width="1.2" stroke-linejoin="round"><rect x="3" y="7" width="10" height="7.5" fill="#dcdcdc" stroke="none"/><path d="M5.2 7 V5 A2.8 2.8 0 0 1 10.8 5 V7" stroke-width="1.5"/><circle cx="8" cy="10.5" r="1" fill="#535353" stroke="none"/></svg>
<span class="t" style="left:1189px;top:512px;font-size:10.5px;letter-spacing:-0.2px">Fill:</span>
<div class="abs fld" style="left:1208px;top:510px;width:35px;height:18px;background:#454545"></div>
<span class="t" style="left:1213px;top:512px;font-size:10.5px;letter-spacing:-0.3px">100%</span>
<div class="abs fld" style="left:1243px;top:510px;width:15px;height:18px;background:#4c4c4c"></div>
<svg class="abs" style="left:1246px;top:516px" width="9" height="6" viewBox="0 0 9 6"><path d="M0.8 0.8 L4.5 4.6 L8.2 0.8" stroke="#c8c8c8" stroke-width="1.1" fill="none"/></svg>
<div class="abs" style="left:1028px;top:534px;width:268px;height:1px;background:#444"></div>
<div class="abs" style="left:1296px;top:534px;width:17px;height:83px;background:#505050"></div>
<div class="abs" style="left:1059px;top:535px;width:237px;height:40px;background:#696969"></div>
<div class="abs" style="left:1058px;top:535px;width:1px;height:82px;background:#474747"></div>
<div class="abs" style="left:1028px;top:575px;width:268px;height:1px;background:#474747"></div>
<div class="abs" style="left:1028px;top:616px;width:285px;height:1px;background:#444"></div>
<svg class="abs" style="left:1036px;top:551px" width="15" height="10" viewBox="0 0 15 10"><path d="M0.5 5 C3 0.8 12 0.8 14.5 5 C12 9.2 3 9.2 0.5 5Z" fill="#e4e4e4"/><circle cx="7.5" cy="5" r="2.6" fill="#535353"/><circle cx="7.5" cy="5" r="1.2" fill="#e4e4e4"/></svg>
<svg class="abs" style="left:1036px;top:592px" width="15" height="10" viewBox="0 0 15 10"><path d="M0.5 5 C3 0.8 12 0.8 14.5 5 C12 9.2 3 9.2 0.5 5Z" fill="#e4e4e4"/><circle cx="7.5" cy="5" r="2.6" fill="#535353"/><circle cx="7.5" cy="5" r="1.2" fill="#e4e4e4"/></svg>
<svg class="abs" style="left:1060px;top:537px" width="29" height="36" viewBox="0 0 29 36"><defs><pattern id="ck" width="8" height="8" patternUnits="userSpaceOnUse"><rect width="8" height="8" fill="#fff"/><rect width="4" height="4" fill="#cccccc"/><rect x="4" y="4" width="4" height="4" fill="#cccccc"/></pattern></defs><rect x="3" y="3" width="23" height="30" fill="url(#ck)"/><path d="M0.5 8V0.5H8M21 0.5H28.5V8M28.5 28V35.5H21M8 35.5H0.5V28" fill="none" stroke="#f4f4f4" stroke-width="1"/></svg>
<span class="t" style="left:1096px;top:549px;font-size:10.5px;letter-spacing:-0.25px;color:#f0f0f0">Layer 1</span>
<div class="abs" style="left:1063px;top:581px;width:24px;height:30px;background:#000"></div><div class="abs" style="left:1065px;top:587px;width:19px;height:21px;background:#fff"></div>
<span class="t" style="left:1096px;top:590px;font-size:10.5px;letter-spacing:-0.25px;color:#f0f0f0">Shape 1</span>
<svg class="abs" style="left:1269px;top:590px" width="12" height="14" viewBox="0 0 12 14"><rect x="1" y="6" width="10" height="7.5" fill="#dcdcdc"/><path d="M3.3 6 V4.2 A2.7 2.7 0 0 1 8.7 4.2 V6" stroke="#dcdcdc" stroke-width="1.4" fill="none"/><circle cx="6" cy="9.6" r="1" fill="#535353"/></svg>
<svg class="abs" style="left:1109px;top:625px" width="16" height="16" viewBox="0 0 16 16" fill="none" stroke="#858585" stroke-width="1.2" stroke-linejoin="round"><rect x="1" y="5" width="8" height="6" rx="3" stroke-width="1.4"/><rect x="7" y="5" width="8" height="6" rx="3" stroke-width="1.4"/></svg>
<span class="t" style="left:1137px;top:624px;font-family:'Liberation Serif',serif;font-style:italic;font-size:16px;line-height:17px;color:#dcdcdc">fx</span><svg class="abs" style="left:1148px;top:639px" width="5" height="3"><path d="M0 0H5L2.5 3Z" fill="#dcdcdc"/></svg>
<svg class="abs" style="left:1162px;top:624px" width="16" height="16" viewBox="0 0 16 16" fill="none" stroke="#dcdcdc" stroke-width="1.2" stroke-linejoin="round"><rect x="1.5" y="3" width="13" height="10" fill="#dcdcdc" stroke="none"/><circle cx="8" cy="8" r="2.8" fill="#535353" stroke="none"/></svg>
<svg class="abs" style="left:1190px;top:624px" width="16" height="16" viewBox="0 0 16 16" fill="none" stroke="#dcdcdc" stroke-width="1.2" stroke-linejoin="round"><circle cx="8" cy="8" r="5.6"/><path d="M4 12 A5.6 5.6 0 0 0 12 4Z" fill="#dcdcdc" stroke="none"/></svg>
<svg class="abs" style="left:1203px;top:639px" width="5" height="3"><path d="M0 0H5L2.5 3Z" fill="#dcdcdc"/></svg>
<svg class="abs" style="left:1217px;top:624px" width="16" height="16" viewBox="0 0 16 16" fill="none" stroke="#dcdcdc" stroke-width="1.2" stroke-linejoin="round"><path d="M1.5 3 H6.5 L7.5 4.8 H14.5 V13 H1.5Z" fill="#dcdcdc" stroke="none"/></svg>
<svg class="abs" style="left:1244px;top:624px" width="16" height="16" viewBox="0 0 16 16" fill="none" stroke="#dcdcdc" stroke-width="1.2" stroke-linejoin="round"><rect x="2.5" y="2.5" width="11" height="11"/><path d="M8 5.2V10.8M5.2 8H10.8"/></svg>
<svg class="abs" style="left:1270px;top:624px" width="16" height="16" viewBox="0 0 16 16" fill="none" stroke="#dcdcdc" stroke-width="1.2" stroke-linejoin="round"><path d="M2.5 4.2H13.5M6 4 V2.2 H10 V4M4 4.5 V14 H12 V4.5M6.6 6.5V12M9.4 6.5V12"/></svg>
<div class="abs" style="left:1028px;top:645px;width:285px;height:3px;background:#3d3d3d"></div>
<div class="abs" style="left:1028px;top:648px;width:285px;height:28px;background:#424242"></div>
<div class="abs" style="left:1172px;top:648px;width:57px;height:28px;background:#535353"></div>
<div class="abs" style="left:1095px;top:648px;width:1px;height:27px;background:#383838"></div>
<div class="abs" style="left:1171px;top:648px;width:1px;height:27px;background:#383838"></div>
<div class="abs" style="left:1229px;top:648px;width:1px;height:27px;background:#383838"></div>
<span class="t ptab" style="left:1037px;top:654px">Properties</span>
<span class="t ptab" style="left:1104px;top:654px">Adjustments</span>
<span class="t ptab on" style="left:1181px;top:654px">Libraries</span>
<svg class="abs" style="left:1297px;top:657px" width="11" height="8" viewBox="0 0 11 8"><path d="M0 0.6H11M0 2.9H11M0 5.2H11M0 7.5H11" stroke="#cfcfcf" stroke-width="1"/></svg>
<div class="abs" style="left:1028px;top:676px;width:285px;height:3px;background:#3d3d3d"></div>
<div class="abs" style="left:1028px;top:679px;width:285px;height:29px;background:#424242"></div>
<div class="abs" style="left:1088px;top:679px;width:43px;height:29px;background:#535353"></div>
<div class="abs" style="left:1087px;top:679px;width:1px;height:28px;background:#383838"></div>
<div class="abs" style="left:1131px;top:679px;width:1px;height:28px;background:#383838"></div>
<span class="t ptab" style="left:1037px;top:686px">Channels</span>
<span class="t ptab on" style="left:1098px;top:686px">Paths</span>
<svg class="abs" style="left:1297px;top:689px" width="11" height="8" viewBox="0 0 11 8"><path d="M0 0.6H11M0 2.9H11M0 5.2H11M0 7.5H11" stroke="#cfcfcf" stroke-width="1"/></svg>
<div class="abs" style="left:14px;top:708px;width:1300px;height:4px;background:#484848"></div>
<!-- CURSOR -->
<div class="abs" style="left:884px;top:523px;width:72px;height:72px;border:4px solid #f1f02e;border-radius:50%"></div>
<svg class="abs" style="left:918px;top:558px" width="13" height="20" viewBox="0 0 13 20"><path d="M1.2 1.2 V16 L4.8 12.6 L7.4 18.6 L9.8 17.6 L7.2 11.8 H12 Z" fill="#fff" stroke="#2a2a2a" stroke-width="0.9"/></svg>
</div>
</body>
</html>
